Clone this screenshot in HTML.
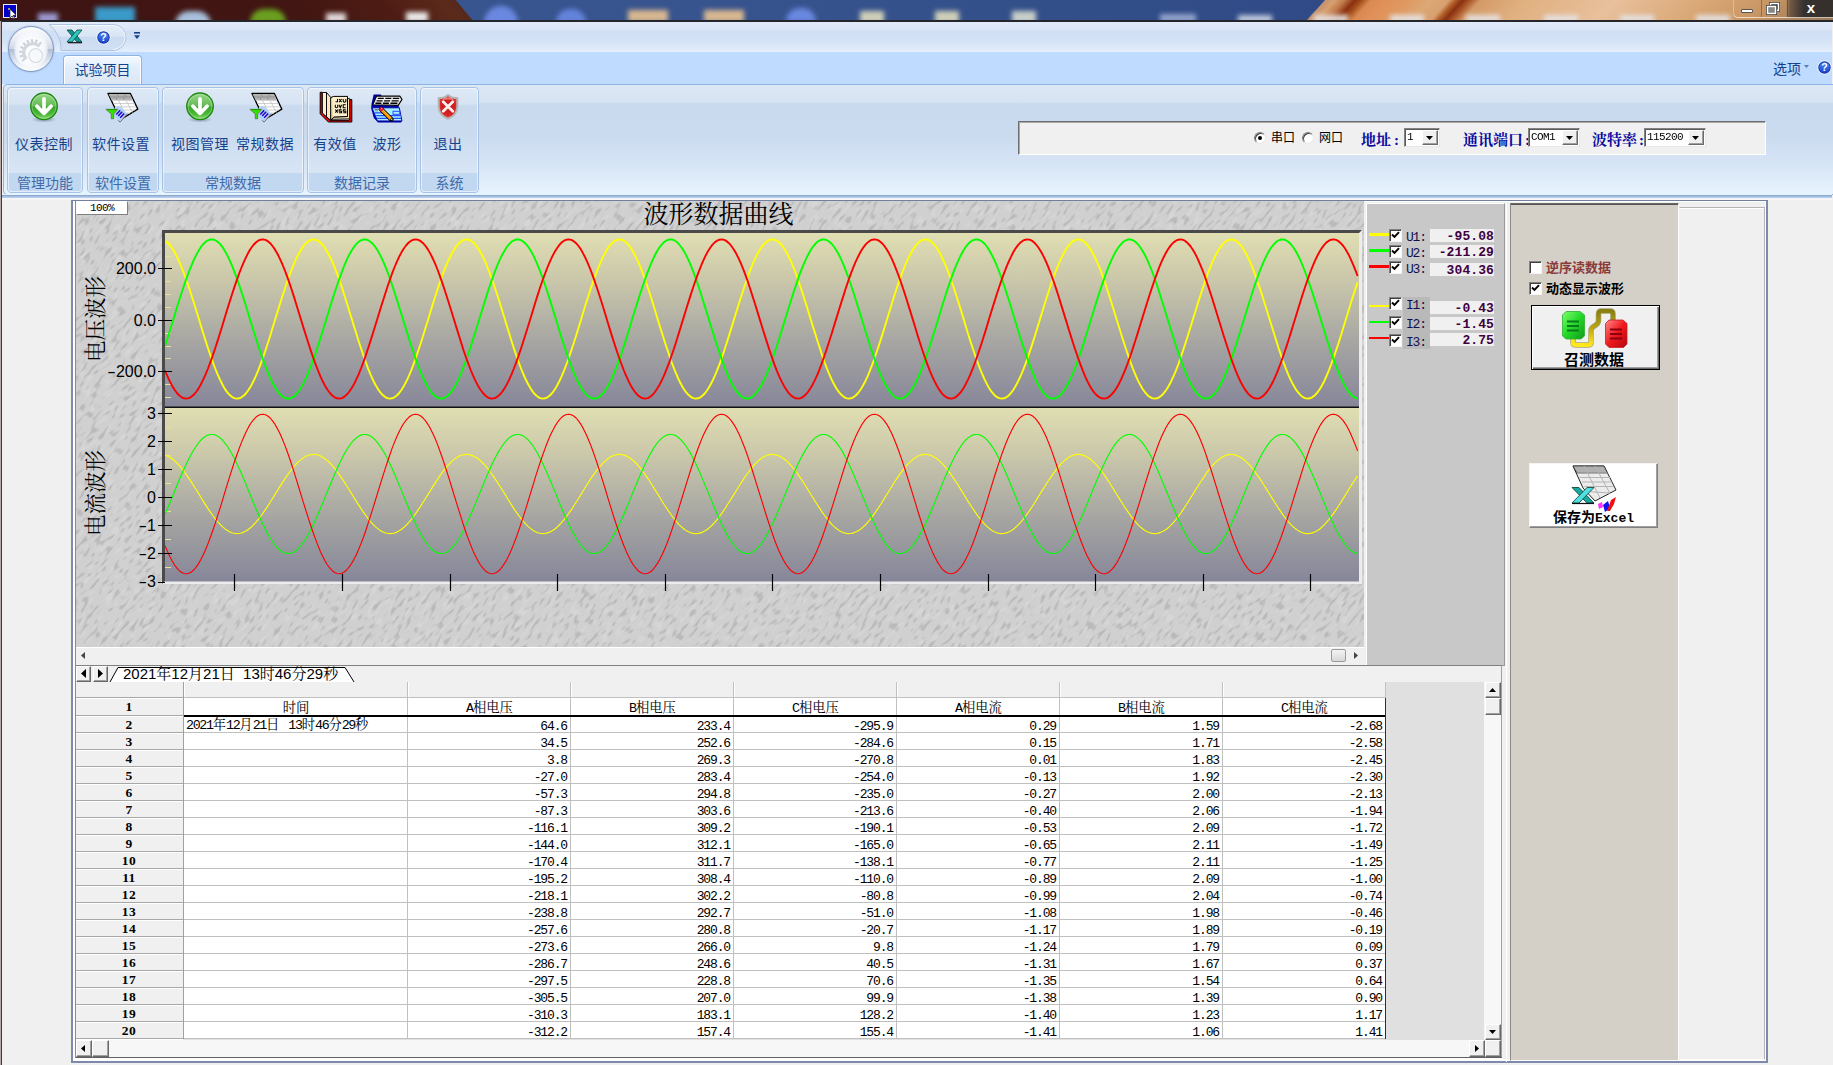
<!DOCTYPE html>
<html lang="zh-CN"><head><meta charset="utf-8"><title>波形数据曲线</title>
<style>

html,body{margin:0;padding:0}
body{width:1833px;height:1065px;overflow:hidden;position:relative;background:#f0f0f0;
 font-family:"Liberation Sans","Noto Sans CJK SC",sans-serif;font-size:12px;color:#000}
.a{position:absolute}
.sans{font-family:"Liberation Sans","Noto Sans CJK SC",sans-serif}
.serif{font-family:"Liberation Serif","Noto Serif CJK SC",serif}
.mono{font-family:"Liberation Mono","Noto Sans CJK SC",monospace}
/* title bar */
#title{left:0;top:0;width:1833px;height:20px;overflow:hidden;background:linear-gradient(90deg,#3a5690 0,#38548e 700px,#34508a 1000px,#2f4a86 1330px)}
#tl{position:absolute;left:-30px;top:0;width:493.5px;height:20px;transform:skewX(40deg);background:linear-gradient(90deg,#3d1414 0,#421612 330px,#4e1c14 420px,#5c2a1a 480px,#56281c 493px)}
#tr{position:absolute;left:1315.5px;top:0;width:560px;height:20px;transform:skewX(-42deg);background:linear-gradient(90deg,#c09070 0,#d8a070 10px,#c07848 20px,#8a3010 30px,#a04818 36px,#d88850 46px,#e09058 60px,#df9a62 85px,#dca874 105px,#d8a070 124px,#b05c28 131px,#8a3010 138px,#a85428 145px,#d49a68 156px,#e0b080 200px,#e8c09c 290px,#d8a674 385px,#c89664 445px,#b08860 475px,#8a7058 560px)}
#title i{position:absolute;display:block;filter:blur(2.5px)}
#titleline{left:0;top:20px;width:1833px;height:1.5px;background:#25252c}
/* ribbon */
#qat{left:2px;top:21.5px;width:1830px;height:30.5px;background:linear-gradient(180deg,#e0eaf9 0,#dae6f7 7.5px,#d0dff4 9.5px,#d2e1f5 17.5px,#e2edfb 28.5px,#e4eefb 29.5px,#a9c8ef 29.5px,#a9c8ef 30.5px)}
#tabrow{left:2px;top:52px;width:1830px;height:32px;background:#bfdbff}
#tab{left:63px;top:55px;width:77px;height:29px;border:1px solid #8db2e3;border-bottom:none;border-radius:4px 4px 0 0;
 background:linear-gradient(180deg,#f4f9ff 0,#e3eefb 40%,#dbe7f6 100%);box-shadow:inset 1px 1px 0 #fff, inset -1px 0 0 #fff;
 color:#15428b;font-size:14px;line-height:29px;text-align:center}
#panel{left:3px;top:84px;width:1832px;height:109px;border:1px solid #8db2e3;border-radius:4px;
 background:linear-gradient(180deg,#dde8f5 0,#d6e3f3 17px,#c8d9ee 19px,#cadaef 50px,#d9e7f7 85px,#e7f3fe 108px)}
.grp{top:86.5px;height:106px;border:1px solid #a6c2e4;border-radius:4px;box-sizing:border-box;overflow:hidden;
 background:linear-gradient(180deg,#dfe9f6 0,#d6e3f3 16px,#c9daee 18px,#ccdcf0 50px,#d8e5f5 85px)}
.grp:after{content:"";position:absolute;left:0;top:0;right:0;bottom:0;border:1px solid rgba(255,255,255,.55);border-radius:3px;pointer-events:none}
.grp .cap{position:absolute;left:0;right:0;bottom:0;height:19px;background:#c2d8f1;color:#3e6aaa;font-size:14px;line-height:21px;overflow:hidden;text-align:center}
.rb{position:absolute;top:0;height:84px;color:#15428b;font-size:14px;text-align:center}
.rb span{position:absolute;left:-10px;right:-10px;top:46px;letter-spacing:.45px;line-height:20px;white-space:nowrap}
.rb svg{position:absolute;left:50%;top:3.5px;margin-left:-17px}
#ribbot{left:2px;top:194px;width:1830px;height:6px;background:linear-gradient(180deg,#dff4ff 0,#dff4ff 1px,#93a9cb 1px,#93a9cb 2px,#a4bce0 2px,#a4bce0 3px,#b6cff0 3px,#b6cff0 4px,#f5f5f5 4px,#f5f5f5 6px)}

</style></head>
<body>
<div id="title" class="a"><div id="tl"></div><div id="tr"></div><i style="left:38px;top:13px;width:20px;height:10px;background:#9a9ad0;"></i><i style="left:95px;top:7px;width:40px;height:16px;background:#3a9ac8;"></i><i style="left:175px;top:11px;width:36px;height:14px;background:#a8c0dc;border-radius:18px 18px 0 0"></i><i style="left:250px;top:9px;width:36px;height:14px;background:#6aa020;border-radius:18px 18px 0 0"></i><i style="left:326px;top:13px;width:20px;height:10px;background:#e0d8d8;"></i><i style="left:406px;top:12px;width:22px;height:10px;background:#ececec;"></i><i style="left:484px;top:6px;width:34px;height:18px;background:#6a88e0;border-radius:17px 17px 0 0"></i><i style="left:556px;top:9px;width:30px;height:14px;background:#6484dc;border-radius:15px 15px 0 0"></i><i style="left:628px;top:10px;width:40px;height:12px;background:#d8b890;"></i><i style="left:704px;top:10px;width:40px;height:12px;background:#d8b890;"></i><i style="left:786px;top:8px;width:30px;height:14px;background:#6a88e0;border-radius:15px 15px 0 0"></i><i style="left:860px;top:11px;width:24px;height:12px;background:#d0d0b8;"></i><i style="left:935px;top:11px;width:24px;height:12px;background:#d0d0b8;"></i><i style="left:1012px;top:11px;width:24px;height:12px;background:#c8d0c8;"></i><i style="left:1160px;top:14px;width:36px;height:8px;background:#94a4cc;"></i><i style="left:1238px;top:15px;width:34px;height:8px;background:#c0c8dc;"></i><i style="left:1314px;top:15px;width:34px;height:7px;background:#e4e0e0;"></i><i style="left:1390px;top:15px;width:34px;height:7px;background:#e4e0e0;"></i><i style="left:1466px;top:15px;width:34px;height:7px;background:#e4e0e0;"></i><i style="left:1544px;top:15px;width:34px;height:7px;background:#e4e0e0;"></i><i style="left:1620px;top:15px;width:34px;height:7px;background:#e4e0e0;"></i><i style="left:1696px;top:15px;width:34px;height:7px;background:#e4e0e0;"></i></div><div id="titleline" class="a"></div><div class="a" style="left:3px;top:4px;width:14px;height:14px;background:#0000c8;border:1px solid #e8e8f0;box-sizing:border-box"></div><svg class="a" style="left:3px;top:4px" width="16" height="16" viewBox="0 0 16 16"><path d="M7 5 L7 14 L9 12 L11 15 L12 14 L10 11.5 L13 11 Z" fill="#fff" stroke="#222" stroke-width=".7"/><circle cx="6" cy="5" r="1" fill="#d8c060"/></svg><div class="a" style="left:1733px;top:0;width:100px;height:18px;border:1px solid rgba(255,240,225,.75);border-top:none;border-right:none;border-radius:0 0 0 5px;box-sizing:border-box;background:linear-gradient(90deg,rgba(0,0,0,0) 0,rgba(0,0,0,0) 52px,rgba(60,50,45,.55) 56px,rgba(40,40,42,.9) 70px,rgba(48,44,42,.95) 100px)"></div><div class="a" style="left:1761px;top:0;width:1px;height:17px;background:rgba(120,80,50,.6)"></div><div class="a" style="left:1787px;top:0;width:1px;height:17px;background:rgba(90,60,40,.7)"></div><div class="a" style="left:1741px;top:9px;width:12px;height:4px;background:#fff;border:1px solid #555;box-sizing:border-box;border-radius:1px"></div><svg class="a" style="left:1766px;top:2px" width="14" height="13" viewBox="0 0 14 13"><rect x="4.5" y="1.5" width="8" height="7" fill="none" stroke="#444" stroke-width="3"/><rect x="4.5" y="1.5" width="8" height="7" fill="none" stroke="#fff" stroke-width="1.4"/><rect x="1.5" y="4.5" width="8" height="7" fill="#777" stroke="#444" stroke-width="3"/><rect x="1.5" y="4.5" width="8" height="7" fill="#888" stroke="#fff" stroke-width="1.4"/></svg><div class="a sans" style="left:1803px;top:-1px;width:16px;height:18px;color:#fff;font-weight:bold;font-size:15px;line-height:18px;text-align:center">x</div><div class="a" style="left:0;top:21px;width:.700px;height:1044px;background:#b8a8a8"></div><div class="a" style="left:.700px;top:21px;width:1.300px;height:1044px;background:#4a3838"></div><div id="qat" class="a"></div><div id="tabrow" class="a"></div><svg class="a" style="left:40px;top:22px" width="90" height="30" viewBox="40 22 90 30"><defs><linearGradient id="qp" x1="0" y1="0" x2="0" y2="1"><stop offset="0" stop-color="#e4edf9"/><stop offset=".45" stop-color="#d9e5f5"/><stop offset=".5" stop-color="#cadaf0"/><stop offset="1" stop-color="#d2e0f3"/></linearGradient></defs><path d="M49 24.500 H113 A13 13 0 0 1 113 50.500 H61 A30 30 0 0 0 49 24.500 Z" fill="url(#qp)" stroke="#aec4e4" stroke-width="1"/><path d="M51.500 25.500 H113 A12 12 0 0 1 113 49.500" fill="none" stroke="rgba(255,255,255,.7)" stroke-width="1"/></svg><svg class="a" style="left:66px;top:28px" width="18" height="16" viewBox="0 0 18 16"><path d="M1 2 L6 2 L16 14 L11 14 Z" fill="#109890" stroke="#064840" stroke-width=".8"/><path d="M11 2 L16 2 L6 14 L1 14 Z" fill="#30c8c0" stroke="#064840" stroke-width=".8"/><path d="M2 14.7 L16 14.7" stroke="#111" stroke-width="1.2"/></svg><svg class="a" style="left:95.500px;top:30px" width="15" height="15" viewBox="0 0 15 15"><defs><linearGradient id="hq" x1="0" y1="0" x2="0" y2="1"><stop offset="0" stop-color="#4a86ff"/><stop offset="1" stop-color="#1a44c8"/></linearGradient></defs><circle cx="7.500" cy="7.500" r="7.200" fill="#eef3ff"/><circle cx="7.500" cy="7.500" r="6.200" fill="#1634a8"/><circle cx="7.500" cy="7.500" r="5.300" fill="url(#hq)"/><text x="7.500" y="11.200" text-anchor="middle" font-family="Liberation Sans,sans-serif" font-weight="bold" font-size="10.500" fill="#fff">?</text></svg><svg class="a" style="left:133px;top:32px" width="8" height="8" viewBox="0 0 8 8"><rect x="1" y="0" width="6" height="1.6" fill="#15428b"/><path d="M1 3.2 L7 3.2 L4 7 Z" fill="#15428b"/></svg><div class="a" style="left:8px;top:25.500px;width:46px;height:46px;box-sizing:border-box;border-radius:50%;border:1px solid #7f9ac4;background:linear-gradient(180deg,#fbfcfe 0,#e9edf4 28%,#d0d8e5 49%,#aebdd6 50%,#d2dcea 70%,#f4f7fb 90%,#ffffff 100%);box-shadow:0 0 1.500px rgba(90,120,170,.7)"></div><div class="a" style="left:14px;top:31px;width:34px;height:36px;border-radius:50%;background:radial-gradient(ellipse at 50% 55%,#ffffff 0,#fafbfd 45%,rgba(246,248,252,.85) 62%,rgba(240,244,250,0) 78%)"></div><svg class="a" style="left:17px;top:37px" width="30" height="30" viewBox="0 0 30 30"><g fill="none" stroke="#ccd2da" stroke-width="3.600" stroke-dasharray="2.100 2.100"><path d="M7.300 23.500 A11 11 0 0 1 24 7.500"/></g><path d="M9.200 22 A8.600 8.600 0 0 1 22.400 9.400" fill="none" stroke="#d3d8df" stroke-width="3.400"/><circle cx="18.700" cy="18.600" r="6.900" fill="#f7f8fb" stroke="#d8dde5" stroke-width="1.200"/></svg><div id="tab" class="a">试验项目</div><div id="panel" class="a"></div><div class="a grp" style="left:7px;width:76px"><div class="rb" style="left:16px;width:40px"><svg width="34" height="34" viewBox="0 0 34 34"><defs><linearGradient id="gg1" x1="0" y1="0" x2="0" y2="1"><stop offset="0" stop-color="#9ad88c"/><stop offset=".5" stop-color="#62b952"/><stop offset=".52" stop-color="#37a524"/><stop offset=".8" stop-color="#4db83a"/><stop offset="1" stop-color="#86dc6c"/></linearGradient><radialGradient id="gs1"><stop offset="0" stop-color="rgba(40,50,70,.45)"/><stop offset="1" stop-color="rgba(40,50,70,0)"/></radialGradient></defs><ellipse cx="17" cy="28.500" rx="12.500" ry="3.200" fill="url(#gs1)"/><circle cx="17" cy="15.300" r="13.300" fill="url(#gg1)" stroke="#1f8a12" stroke-width="1.300"/><circle cx="17" cy="15.300" r="12" fill="none" stroke="rgba(255,255,255,.28)" stroke-width="1"/><path d="M17 7.800 V21.500 M9.900 15.300 L17 22.400 L24.100 15.300" fill="none" stroke="#fff" stroke-width="3.700" stroke-linecap="round" stroke-linejoin="round"/></svg><span>仪表控制</span></div><div class="cap">管理功能</div></div><div class="a grp" style="left:87px;width:72px"><div class="rb" style="left:13px;width:40px"><svg width="36" height="34" viewBox="0 0 36 34"><path d="M4 2.400 H26.300 L33.800 18.100 L16.400 28.600 Z" fill="#fcfcfc" stroke="#000" stroke-width="1.300" stroke-linejoin="round"/><path d="M4.600 3 H25.900 L29 9.200 H7.700 Z" fill="#b2b2b2"/><path d="M6 6 H27.400 M13 3 L14.600 6 M20.500 3 L22 6 M11.500 6 L13 9.200 M19 6 L20.500 9.200" stroke="#8c8c8c" stroke-width=".8" fill="none"/><path d="M7.700 9.200 H29 M9.400 12.500 H30.600 M11 15.800 H32.200 M13 19 H31 M16 22.200 H26 M14.500 9.200 L22 24.500 M22 9.200 L28.500 21.500" stroke="#c4c4c4" stroke-width=".8" fill="none"/><path d="M11 15.300 L16.500 15.600 L23.300 22.800 L16.200 31.100 L10 25 Z" fill="#b4d4fc"/><path d="M23.300 22.800 L16.200 31.100 L14 29.300" fill="none" stroke="#6a6a6a" stroke-width=".9"/><path d="M12.200 23.500 L16.200 19.200 M14.200 25.100 L18.200 20.800 M16.200 26.700 L20.200 22.400" stroke="#2400c8" stroke-width="1.500"/><path d="M1.900 18.300 H13.800 L9.700 23 V27.800 H7.200 V23 Z" fill="#35e000" stroke="#4a5a4a" stroke-width=".6" stroke-linejoin="round"/><path d="M2.500 18.600 H13.200" stroke="#1c9c00" stroke-width=".9"/></svg><span>软件设置</span></div><div class="cap">软件设置</div></div><div class="a grp" style="left:162px;width:142px"><div class="rb" style="left:17px;width:40px"><svg width="34" height="34" viewBox="0 0 34 34"><defs><linearGradient id="gg2" x1="0" y1="0" x2="0" y2="1"><stop offset="0" stop-color="#9ad88c"/><stop offset=".5" stop-color="#62b952"/><stop offset=".52" stop-color="#37a524"/><stop offset=".8" stop-color="#4db83a"/><stop offset="1" stop-color="#86dc6c"/></linearGradient><radialGradient id="gs2"><stop offset="0" stop-color="rgba(40,50,70,.45)"/><stop offset="1" stop-color="rgba(40,50,70,0)"/></radialGradient></defs><ellipse cx="17" cy="28.500" rx="12.500" ry="3.200" fill="url(#gs2)"/><circle cx="17" cy="15.300" r="13.300" fill="url(#gg2)" stroke="#1f8a12" stroke-width="1.300"/><circle cx="17" cy="15.300" r="12" fill="none" stroke="rgba(255,255,255,.28)" stroke-width="1"/><path d="M17 7.800 V21.500 M9.900 15.300 L17 22.400 L24.100 15.300" fill="none" stroke="#fff" stroke-width="3.700" stroke-linecap="round" stroke-linejoin="round"/></svg><span>视图管理</span></div><div class="rb" style="left:82px;width:40px"><svg width="36" height="34" viewBox="0 0 36 34"><path d="M4 2.400 H26.300 L33.800 18.100 L16.400 28.600 Z" fill="#fcfcfc" stroke="#000" stroke-width="1.300" stroke-linejoin="round"/><path d="M4.600 3 H25.900 L29 9.200 H7.700 Z" fill="#b2b2b2"/><path d="M6 6 H27.400 M13 3 L14.600 6 M20.500 3 L22 6 M11.500 6 L13 9.200 M19 6 L20.500 9.200" stroke="#8c8c8c" stroke-width=".8" fill="none"/><path d="M7.700 9.200 H29 M9.400 12.500 H30.600 M11 15.800 H32.200 M13 19 H31 M16 22.200 H26 M14.500 9.200 L22 24.500 M22 9.200 L28.500 21.500" stroke="#c4c4c4" stroke-width=".8" fill="none"/><path d="M11 15.300 L16.500 15.600 L23.300 22.800 L16.200 31.100 L10 25 Z" fill="#b4d4fc"/><path d="M23.300 22.800 L16.200 31.100 L14 29.300" fill="none" stroke="#6a6a6a" stroke-width=".9"/><path d="M12.200 23.500 L16.200 19.200 M14.200 25.100 L18.200 20.800 M16.200 26.700 L20.200 22.400" stroke="#2400c8" stroke-width="1.500"/><path d="M1.900 18.300 H13.800 L9.700 23 V27.800 H7.200 V23 Z" fill="#35e000" stroke="#4a5a4a" stroke-width=".6" stroke-linejoin="round"/><path d="M2.500 18.600 H13.200" stroke="#1c9c00" stroke-width=".9"/></svg><span>常规数据</span></div><div class="cap">常规数据</div></div><div class="a grp" style="left:307px;width:110px"><div class="rb" style="left:7px;width:40px"><svg width="36" height="34" viewBox="0 0 36 34"><path d="M2.200 1.300 H4.300 V22 L12 29.300 H31.600 V8.600 H33.800 V31 H10.400 L2.200 22.800 Z" fill="#ff0000" stroke="#000" stroke-width="1" stroke-linejoin="round"/><path d="M4.400 1.500 H8.500 V25.800 L4.400 22 Z" fill="#fdf0cc" stroke="#000" stroke-width=".9" stroke-linejoin="round"/><path d="M8.500 1.500 L12.800 6.500 V29.300 L8.500 25.800 Z" fill="#fbe9c0" stroke="#000" stroke-width=".9" stroke-linejoin="round"/><path d="M29.500 7.500 H31.600 V27.800 L13.600 28.300 L15.800 26 L29.500 25.500 Z" fill="#f6e6ba" stroke="#000" stroke-width=".8" stroke-linejoin="round"/><path d="M12.800 6.500 L15.800 5.400 H29.500 V25.500 L15.800 26 L12.800 29.300 Z" fill="#fdf0cc" stroke="#000" stroke-width="1" stroke-linejoin="round"/><path d="M13.600 8 L14.600 26.500" stroke="#e8d4a0" stroke-width="1.200"/><g stroke="#000" stroke-width="1.050" fill="none"><path d="M19.500 8 V10.800 H17.500 M21 8 L23.600 11.200 M23.600 8 L21 11.200 M25.200 8 V10.400 Q26.500 12 27.800 10.400 V8"/><path d="M17.300 13.800 V16 Q18.500 17.600 19.700 16 V13.800 M21 13.800 L22.300 16.800 L23.600 13.800 M27.800 13.800 H25.200 V16.700 H27.800"/><path d="M17.300 18.700 L19.900 21.700 M19.900 18.700 L17.300 21.700 M23.600 18.700 H21.200 V20.200 H23.600 V21.700 H21 M27.800 18.700 H25.400 V20.200 H27.800 V21.700 H25.200"/></g></svg><span>有效值</span></div><div class="rb" style="left:59px;width:40px"><svg width="34" height="34" viewBox="0 0 34 34"><path d="M3.600 3.600 H11 L11.500 5.100 H6.600 L2.800 13.800 L28.200 14.400 L29.300 16.800 L32 29.900 L31 31.600 H8 L3.800 27 L1.200 17.500 L1.500 13 Z" fill="#0000a8"/><path d="M6.600 5.100 H29.800 L32 8.400 L28.200 14.400 L2.800 13.800 Z" fill="#eeeeee" stroke="#000" stroke-width="1.100" stroke-linejoin="round"/><path d="M7.800 7.400 H13.800 M15.300 7.400 H21.300 M22.800 7.400 H29.200 M6.600 9.900 H12.600 M14.100 9.900 H20.100 M21.600 9.900 H28.600 M5.400 12.300 H11.400 M12.900 12.300 H18.900 M20.400 12.300 H27.400" stroke="#000" stroke-width="1.400"/><path d="M2 16.800 H29.300 L32 29.900 H7.500 Z" fill="#a4f2ff" stroke="#0000a8" stroke-width=".9" stroke-linejoin="round"/><path d="M5 21.800 H13.500 M6.200 24.600 H30 M7.200 27.300 H31" stroke="#2848ff" stroke-width="1.200"/><rect x="23" y="20.300" width="6.800" height="3" fill="none" stroke="#2848ff" stroke-width="1"/><path d="M4.500 18.500 H9 M5 19.800 H8" stroke="#808080" stroke-width="1"/><path d="M11.200 18.300 L21.300 28.400" stroke="#000" stroke-width="4.600" stroke-linecap="round"/><path d="M11.600 18.700 L20.800 27.900" stroke="#ff9800" stroke-width="2.900" stroke-linecap="butt"/><path d="M12.400 18.300 L21.400 27.300" stroke="#ffc860" stroke-width=".9"/><circle cx="11.200" cy="18.200" r="1.900" fill="#f0103c"/><circle cx="11.600" cy="17.600" r=".8" fill="#ff9ab0"/><path d="M20.200 28.700 L22.100 26.800 L23 29.800 Z" fill="#fff0d0" stroke="#000" stroke-width=".6"/></svg><span>波形</span></div><div class="cap">数据记录</div></div><div class="a grp" style="left:420px;width:59px"><div class="rb" style="left:7px;width:40px"><svg width="34" height="34" viewBox="0 0 34 34"><defs><radialGradient id="sg" cx="50%" cy="45%" r="65%"><stop offset="0" stop-color="#c81818"/><stop offset=".55" stop-color="#d42020"/><stop offset="1" stop-color="#e86060"/></radialGradient></defs><path d="M17 4 C15 5.800 11 7.100 7.700 7.100 L7.700 16 C8.100 21.800 12 25.800 17 27.800 C22 25.800 25.900 21.800 26.300 16 L26.300 7.100 C23 7.100 19 5.800 17 4 Z" fill="url(#sg)" stroke="#b4b4b4" stroke-width="2" stroke-linejoin="round"/><path d="M13 6.800 Q17 5.500 21 6.800 L22.500 9 Q17 7.800 11.500 9 Z" fill="rgba(255,200,200,.5)"/><path d="M12.200 10.700 L21.800 20.300 M21.800 10.700 L12.200 20.300" stroke="#fff" stroke-width="2.800" stroke-linecap="round" opacity=".93"/></svg><span>退出</span></div><div class="cap">系统</div></div><div id="ribbot" class="a"></div><div class="a" style="left:1773px;top:59.500px;color:#15428b;font-size:14px;line-height:18px">选项</div><svg class="a" style="left:1804px;top:65px" width="6" height="4" viewBox="0 0 6 4"><path d="M0 0h5L2.500 3z" fill="#567db1"/></svg><svg class="a" style="left:1816.500px;top:59.500px" width="15" height="15" viewBox="0 0 15 15"><circle cx="7.500" cy="7.500" r="7.200" fill="#eef3ff"/><circle cx="7.500" cy="7.500" r="6.200" fill="#1634a8"/><circle cx="7.500" cy="7.500" r="5.300" fill="url(#hq)"/><text x="7.500" y="11.200" text-anchor="middle" font-family="Liberation Sans,sans-serif" font-weight="bold" font-size="10.500" fill="#fff">?</text></svg><div class="a" style="left:1018px;top:121px;width:748px;height:34px;box-sizing:border-box;background:#f0f0f0;border:1px solid;border-color:#6e6e6e #fff #fff #6e6e6e;box-shadow:inset 1px 1px 0 #a8a8a8"></div><div class="a" style="left:1254px;top:132px;width:12px;height:12px;border-radius:50%;box-sizing:border-box;background:#fff;border:1px solid;border-color:#808080 #e8e8e8 #e8e8e8 #808080;box-shadow:inset 1px 1px 0 #404040"></div><div class="a" style="left:1258px;top:136px;width:4px;height:4px;border-radius:50%;background:#000"></div><div class="a" style="left:1271px;top:130px;font-size:12px;line-height:16px">串口</div><div class="a" style="left:1302px;top:132px;width:12px;height:12px;border-radius:50%;box-sizing:border-box;background:#fff;border:1px solid;border-color:#808080 #e8e8e8 #e8e8e8 #808080;box-shadow:inset 1px 1px 0 #404040"></div><div class="a" style="left:1319px;top:130px;font-size:12px;line-height:16px">网口</div><div class="a serif" style="left:1361px;top:131px;font-weight:bold;font-size:15px;line-height:18px;color:#0a0aa0;white-space:nowrap">地址<span style="margin-left:3px">:</span></div><div class="a" style="left:1404px;top:128px;width:36px;height:19px;box-sizing:border-box;background:#fff;border:1px solid;border-color:#828282 #e8e8e8 #e8e8e8 #828282;box-shadow:inset 1px 1px 0 #5a5a5a"></div><div class="a mono" style="left:1407px;top:130px;font-size:11px;line-height:14px;letter-spacing:-.6px;transform:scaleY(1.05)">1</div><div class="a" style="left:1422px;top:130px;width:16px;height:15px;box-sizing:border-box;background:#f0f0f0;border:1px solid;border-color:#fff #6a6a6a #6a6a6a #fff;box-shadow:inset -1px -1px 0 #a0a0a0"></div><svg class="a" style="left:1426px;top:136px" width="7" height="4" viewBox="0 0 7 4"><path d="M0 0h7L3.500 4z" fill="#000"/></svg><div class="a serif" style="left:1463px;top:131px;font-weight:bold;font-size:15px;line-height:18px;color:#0a0aa0;white-space:nowrap">通讯端口<span style="margin-left:2px">:</span></div><div class="a" style="left:1528px;top:128px;width:52px;height:19px;box-sizing:border-box;background:#fff;border:1px solid;border-color:#828282 #e8e8e8 #e8e8e8 #828282;box-shadow:inset 1px 1px 0 #5a5a5a"></div><div class="a mono" style="left:1531px;top:130px;font-size:11px;line-height:14px;letter-spacing:-.6px;transform:scaleY(1.05)">COM1</div><div class="a" style="left:1562px;top:130px;width:16px;height:15px;box-sizing:border-box;background:#f0f0f0;border:1px solid;border-color:#fff #6a6a6a #6a6a6a #fff;box-shadow:inset -1px -1px 0 #a0a0a0"></div><svg class="a" style="left:1566px;top:136px" width="7" height="4" viewBox="0 0 7 4"><path d="M0 0h7L3.500 4z" fill="#000"/></svg><div class="a serif" style="left:1592px;top:131px;font-weight:bold;font-size:15px;line-height:18px;color:#0a0aa0;white-space:nowrap">波特率<span style="margin-left:2px">:</span></div><div class="a" style="left:1644px;top:128px;width:62px;height:19px;box-sizing:border-box;background:#fff;border:1px solid;border-color:#828282 #e8e8e8 #e8e8e8 #828282;box-shadow:inset 1px 1px 0 #5a5a5a"></div><div class="a mono" style="left:1647px;top:130px;font-size:11px;line-height:14px;letter-spacing:-.6px;transform:scaleY(1.05)">115200</div><div class="a" style="left:1688px;top:130px;width:16px;height:15px;box-sizing:border-box;background:#f0f0f0;border:1px solid;border-color:#fff #6a6a6a #6a6a6a #fff;box-shadow:inset -1px -1px 0 #a0a0a0"></div><svg class="a" style="left:1692px;top:136px" width="7" height="4" viewBox="0 0 7 4"><path d="M0 0h7L3.500 4z" fill="#000"/></svg><div class="a" style="left:71px;top:200px;width:1697px;height:863px;box-sizing:border-box;border:2px solid #7d89ad;border-top:1px solid #737f9f"></div><div class="a" style="left:73px;top:201px;width:1693px;height:860px;box-sizing:border-box;border:1px solid #fff;border-left-width:2px;border-bottom-width:2px"></div><div class="a" style="left:75px;top:201px;width:1px;height:857px;background:#8a8a8a"></div><svg class="a" style="left:76px;top:201px" width="1288" height="446" viewBox="76 201 1288 446"><defs>
<filter id="tex" x="0" y="0" width="100%" height="100%" color-interpolation-filters="sRGB"><feTurbulence type="fractalNoise" baseFrequency="0.11 0.3" numOctaves="1" seed="5"/><feColorMatrix type="matrix" values="0 0 0 0 0.62  0 0 0 0 0.62  0 0 0 0 0.62  7 0 0 0 -3.75"/></filter>
<filter id="tex2" x="0" y="0" width="100%" height="100%" color-interpolation-filters="sRGB"><feTurbulence type="fractalNoise" baseFrequency="0.09 0.26" numOctaves="1" seed="12"/><feColorMatrix type="matrix" values="0 0 0 0 0.92  0 0 0 0 0.92  0 0 0 0 0.92  6 0 0 0 -3.2"/></filter>
<linearGradient id="pg" x1="0" y1="0" x2="0" y2="1"><stop offset="0" stop-color="#e0deb2"/><stop offset=".25" stop-color="#ccc9ab"/><stop offset=".6" stop-color="#a9a8a3"/><stop offset="1" stop-color="#86869a"/></linearGradient>
<clipPath id="cv"><rect x="165" y="233" width="1194" height="174"/></clipPath>
<clipPath id="cc"><rect x="165" y="408" width="1194" height="173.500"/></clipPath>
<clipPath id="call"><rect x="76" y="201" width="1288" height="446"/></clipPath>
</defs><rect x="76" y="201" width="1288" height="446" fill="#d0d0d0"/><g clip-path="url(#call)"><g transform="rotate(-50 720 424)"><rect x="-100" y="-400" width="1700" height="1700" filter="url(#tex)" opacity=".42"/><rect x="-100" y="-400" width="1700" height="1700" filter="url(#tex2)" opacity=".22"/></g></g><rect x="162" y="230" width="1200" height="354" fill="#ececec"/><path d="M162 230 H1362 L1359 233 H165 V581 L162 584 Z" fill="#4a4a4a"/><rect x="165" y="233" width="1194" height="174" fill="url(#pg)"/><rect x="165" y="408" width="1194" height="173.500" fill="url(#pg)"/><rect x="165" y="406.500" width="1194" height="1.500" fill="#111"/><path d="M165 397.5H171M165 384.5H171M165 358.5H171M165 346.5H171M165 333.5H171M165 307.5H171M165 294.5H171M165 281.5H171M165 256.5H171M165 243.5H171M165 567.5H171M165 539.5H171M165 511.5H171M165 483.5H171M165 455.5H171M165 427.5H171" stroke="#e6e09a" stroke-width="1" fill="none"/><g clip-path="url(#cv)" fill="none" stroke-width="1.9" stroke-linejoin="round"><polyline points="165.0,240.7 167.4,242.5 169.8,245.0 172.2,248.2 174.6,252.1 176.9,256.7 179.3,261.8 181.7,267.6 184.1,273.8 186.5,280.4 188.9,287.4 191.3,294.7 193.7,302.3 196.1,310.0 198.5,317.8 200.8,325.6 203.2,333.3 205.6,340.9 208.0,348.3 210.4,355.4 212.8,362.2 215.2,368.5 217.6,374.4 220.0,379.7 222.4,384.5 224.7,388.6 227.1,392.1 229.5,394.8 231.9,396.8 234.3,398.1 236.7,398.6 239.1,398.3 241.5,397.3 243.9,395.5 246.3,393.0 248.6,389.8 251.0,385.9 253.4,381.3 255.8,376.1 258.2,370.4 260.6,364.2 263.0,357.6 265.4,350.6 267.8,343.3 270.2,335.7 272.5,328.0 274.9,320.2 277.3,312.4 279.7,304.7 282.1,297.1 284.5,289.7 286.9,282.6 289.3,275.8 291.7,269.4 294.1,263.6 296.4,258.2 298.8,253.5 301.2,249.4 303.6,245.9 306.0,243.2 308.4,241.2 310.8,239.9 313.2,239.4 315.6,239.7 318.0,240.7 320.3,242.5 322.7,245.0 325.1,248.2 327.5,252.2 329.9,256.7 332.3,261.9 334.7,267.6 337.1,273.8 339.5,280.4 341.9,287.4 344.2,294.7 346.6,302.3 349.0,310.0 351.4,317.8 353.8,325.6 356.2,333.3 358.6,341.0 361.0,348.3 363.4,355.5 365.8,362.2 368.1,368.6 370.5,374.4 372.9,379.8 375.3,384.5 377.7,388.6 380.1,392.1 382.5,394.8 384.9,396.8 387.3,398.1 389.7,398.6 392.0,398.3 394.4,397.3 396.8,395.5 399.2,393.0 401.6,389.8 404.0,385.8 406.4,381.3 408.8,376.1 411.2,370.4 413.6,364.2 415.9,357.6 418.3,350.6 420.7,343.2 423.1,335.7 425.5,328.0 427.9,320.2 430.3,312.4 432.7,304.6 435.1,297.0 437.5,289.6 439.8,282.5 442.2,275.8 444.6,269.4 447.0,263.6 449.4,258.2 451.8,253.5 454.2,249.4 456.6,245.9 459.0,243.2 461.4,241.2 463.7,239.9 466.1,239.4 468.5,239.7 470.9,240.7 473.3,242.5 475.7,245.0 478.1,248.3 480.5,252.2 482.9,256.7 485.3,261.9 487.6,267.6 490.0,273.8 492.4,280.4 494.8,287.5 497.2,294.8 499.6,302.3 502.0,310.0 504.4,317.8 506.8,325.6 509.2,333.4 511.5,341.0 513.9,348.4 516.3,355.5 518.7,362.2 521.1,368.6 523.5,374.5 525.9,379.8 528.3,384.5 530.7,388.6 533.1,392.1 535.4,394.8 537.8,396.8 540.2,398.1 542.6,398.6 545.0,398.3 547.4,397.3 549.8,395.5 552.2,393.0 554.6,389.7 557.0,385.8 559.3,381.3 561.7,376.1 564.1,370.4 566.5,364.2 568.9,357.5 571.3,350.5 573.7,343.2 576.1,335.7 578.5,327.9 580.9,320.2 583.2,312.3 585.6,304.6 588.0,297.0 590.4,289.6 592.8,282.5 595.2,275.7 597.6,269.4 600.0,263.5 602.4,258.2 604.8,253.5 607.1,249.3 609.5,245.9 611.9,243.2 614.3,241.2 616.7,239.9 619.1,239.4 621.5,239.7 623.9,240.7 626.3,242.5 628.7,245.0 631.0,248.3 633.4,252.2 635.8,256.8 638.2,261.9 640.6,267.6 643.0,273.8 645.4,280.5 647.8,287.5 650.2,294.8 652.6,302.4 654.9,310.1 657.3,317.9 659.7,325.7 662.1,333.4 664.5,341.0 666.9,348.4 669.3,355.5 671.7,362.3 674.1,368.6 676.5,374.5 678.8,379.8 681.2,384.5 683.6,388.7 686.0,392.1 688.4,394.8 690.8,396.8 693.2,398.1 695.6,398.6 698.0,398.3 700.4,397.3 702.7,395.5 705.1,393.0 707.5,389.7 709.9,385.8 712.3,381.2 714.7,376.1 717.1,370.4 719.5,364.2 721.9,357.5 724.3,350.5 726.6,343.2 729.0,335.6 731.4,327.9 733.8,320.1 736.2,312.3 738.6,304.6 741.0,297.0 743.4,289.6 745.8,282.5 748.2,275.7 750.5,269.4 752.9,263.5 755.3,258.2 757.7,253.4 760.1,249.3 762.5,245.9 764.9,243.2 767.3,241.2 769.7,239.9 772.1,239.4 774.4,239.7 776.8,240.7 779.2,242.5 781.6,245.0 784.0,248.3 786.4,252.2 788.8,256.8 791.2,261.9 793.6,267.7 796.0,273.9 798.3,280.5 800.7,287.5 803.1,294.8 805.5,302.4 807.9,310.1 810.3,317.9 812.7,325.7 815.1,333.4 817.5,341.0 819.9,348.4 822.2,355.5 824.6,362.3 827.0,368.6 829.4,374.5 831.8,379.8 834.2,384.6 836.6,388.7 839.0,392.1 841.4,394.8 843.8,396.8 846.1,398.1 848.5,398.6 850.9,398.3 853.3,397.3 855.7,395.5 858.1,393.0 860.5,389.7 862.9,385.8 865.3,381.2 867.7,376.1 870.0,370.3 872.4,364.1 874.8,357.5 877.2,350.5 879.6,343.1 882.0,335.6 884.4,327.9 886.8,320.1 889.2,312.3 891.6,304.5 893.9,296.9 896.3,289.5 898.7,282.4 901.1,275.7 903.5,269.3 905.9,263.5 908.3,258.2 910.7,253.4 913.1,249.3 915.5,245.9 917.8,243.1 920.2,241.1 922.6,239.9 925.0,239.4 927.4,239.7 929.8,240.7 932.2,242.5 934.6,245.1 937.0,248.3 939.4,252.2 941.7,256.8 944.1,262.0 946.5,267.7 948.9,273.9 951.3,280.5 953.7,287.5 956.1,294.9 958.5,302.4 960.9,310.1 963.3,317.9 965.6,325.7 968.0,333.5 970.4,341.1 972.8,348.5 975.2,355.6 977.6,362.3 980.0,368.7 982.4,374.5 984.8,379.8 987.2,384.6 989.5,388.7 991.9,392.1 994.3,394.9 996.7,396.9 999.1,398.1 1001.5,398.6 1003.9,398.3 1006.3,397.3 1008.7,395.5 1011.1,392.9 1013.4,389.7 1015.8,385.8 1018.2,381.2 1020.6,376.0 1023.0,370.3 1025.4,364.1 1027.8,357.5 1030.2,350.4 1032.6,343.1 1035.0,335.6 1037.3,327.9 1039.7,320.1 1042.1,312.2 1044.5,304.5 1046.9,296.9 1049.3,289.5 1051.7,282.4 1054.1,275.7 1056.5,269.3 1058.9,263.5 1061.2,258.1 1063.6,253.4 1066.0,249.3 1068.4,245.9 1070.8,243.1 1073.2,241.1 1075.6,239.9 1078.0,239.4 1080.4,239.7 1082.8,240.7 1085.1,242.5 1087.5,245.1 1089.9,248.3 1092.3,252.2 1094.7,256.8 1097.1,262.0 1099.5,267.7 1101.9,273.9 1104.3,280.6 1106.7,287.6 1109.0,294.9 1111.4,302.5 1113.8,310.2 1116.2,318.0 1118.6,325.8 1121.0,333.5 1123.4,341.1 1125.8,348.5 1128.2,355.6 1130.6,362.4 1132.9,368.7 1135.3,374.5 1137.7,379.9 1140.1,384.6 1142.5,388.7 1144.9,392.1 1147.3,394.9 1149.7,396.9 1152.1,398.1 1154.5,398.6 1156.9,398.3 1159.2,397.3 1161.6,395.5 1164.0,392.9 1166.4,389.7 1168.8,385.8 1171.2,381.2 1173.6,376.0 1176.0,370.3 1178.4,364.1 1180.8,357.4 1183.1,350.4 1185.5,343.1 1187.9,335.5 1190.3,327.8 1192.7,320.0 1195.1,312.2 1197.5,304.5 1199.9,296.9 1202.3,289.5 1204.7,282.4 1207.0,275.6 1209.4,269.3 1211.8,263.4 1214.2,258.1 1216.6,253.4 1219.0,249.3 1221.4,245.9 1223.8,243.1 1226.2,241.1 1228.6,239.9 1230.9,239.4 1233.3,239.7 1235.7,240.7 1238.1,242.5 1240.5,245.1 1242.9,248.3 1245.3,252.3 1247.7,256.8 1250.1,262.0 1252.5,267.7 1254.8,273.9 1257.2,280.6 1259.6,287.6 1262.0,294.9 1264.4,302.5 1266.8,310.2 1269.2,318.0 1271.6,325.8 1274.0,333.5 1276.4,341.1 1278.7,348.5 1281.1,355.6 1283.5,362.4 1285.9,368.7 1288.3,374.6 1290.7,379.9 1293.1,384.6 1295.5,388.7 1297.9,392.2 1300.3,394.9 1302.6,396.9 1305.0,398.1 1307.4,398.6 1309.8,398.3 1312.2,397.3 1314.6,395.5 1317.0,392.9 1319.4,389.7 1321.8,385.7 1324.2,381.2 1326.5,376.0 1328.9,370.3 1331.3,364.0 1333.7,357.4 1336.1,350.4 1338.5,343.1 1340.9,335.5 1343.3,327.8 1345.7,320.0 1348.1,312.2 1350.4,304.4 1352.8,296.8 1355.2,289.5 1357.6,282.4" stroke="#ffff00"/><polyline points="165.0,346.1 167.4,338.7 169.8,331.0 172.2,323.2 174.6,315.4 176.9,307.6 179.3,300.0 181.7,292.5 184.1,285.3 186.5,278.3 188.9,271.8 191.3,265.8 193.7,260.2 196.1,255.3 198.5,250.9 200.8,247.2 203.2,244.2 205.6,241.9 208.0,240.3 210.4,239.5 212.8,239.5 215.2,240.2 217.6,241.7 220.0,243.9 222.4,246.9 224.7,250.6 227.1,254.9 229.5,259.8 231.9,265.3 234.3,271.3 236.7,277.8 239.1,284.7 241.5,291.9 243.9,299.4 246.3,307.0 248.6,314.8 251.0,322.6 253.4,330.4 255.8,338.0 258.2,345.5 260.6,352.8 263.0,359.7 265.4,366.2 267.8,372.2 270.2,377.8 272.5,382.8 274.9,387.1 277.3,390.8 279.7,393.8 282.1,396.1 284.5,397.7 286.9,398.5 289.3,398.5 291.7,397.8 294.1,396.3 296.4,394.0 298.8,391.1 301.2,387.4 303.6,383.1 306.0,378.2 308.4,372.7 310.8,366.6 313.2,360.2 315.6,353.3 318.0,346.1 320.3,338.6 322.7,331.0 325.1,323.2 327.5,315.4 329.9,307.6 332.3,299.9 334.7,292.5 337.1,285.2 339.5,278.3 341.9,271.8 344.2,265.8 346.6,260.2 349.0,255.2 351.4,250.9 353.8,247.2 356.2,244.1 358.6,241.9 361.0,240.3 363.4,239.5 365.8,239.5 368.1,240.2 370.5,241.7 372.9,244.0 375.3,246.9 377.7,250.6 380.1,254.9 382.5,259.8 384.9,265.3 387.3,271.4 389.7,277.8 392.0,284.7 394.4,291.9 396.8,299.4 399.2,307.1 401.6,314.8 404.0,322.6 406.4,330.4 408.8,338.1 411.2,345.6 413.6,352.8 415.9,359.7 418.3,366.2 420.7,372.3 423.1,377.8 425.5,382.8 427.9,387.1 430.3,390.8 432.7,393.9 435.1,396.2 437.5,397.7 439.8,398.5 442.2,398.5 444.6,397.8 447.0,396.3 449.4,394.0 451.8,391.1 454.2,387.4 456.6,383.1 459.0,378.2 461.4,372.6 463.7,366.6 466.1,360.1 468.5,353.3 470.9,346.1 473.3,338.6 475.7,330.9 478.1,323.2 480.5,315.3 482.9,307.6 485.3,299.9 487.6,292.4 490.0,285.2 492.4,278.3 494.8,271.8 497.2,265.7 499.6,260.2 502.0,255.2 504.4,250.9 506.8,247.1 509.2,244.1 511.5,241.8 513.9,240.3 516.3,239.5 518.7,239.5 521.1,240.2 523.5,241.7 525.9,244.0 528.3,246.9 530.7,250.6 533.1,254.9 535.4,259.9 537.8,265.4 540.2,271.4 542.6,277.9 545.0,284.8 547.4,292.0 549.8,299.4 552.2,307.1 554.6,314.9 557.0,322.7 559.3,330.4 561.7,338.1 564.1,345.6 566.5,352.8 568.9,359.7 571.3,366.2 573.7,372.3 576.1,377.8 578.5,382.8 580.9,387.2 583.2,390.9 585.6,393.9 588.0,396.2 590.4,397.7 592.8,398.5 595.2,398.5 597.6,397.8 600.0,396.3 602.4,394.0 604.8,391.1 607.1,387.4 609.5,383.1 611.9,378.1 614.3,372.6 616.7,366.6 619.1,360.1 621.5,353.2 623.9,346.0 626.3,338.6 628.7,330.9 631.0,323.1 633.4,315.3 635.8,307.5 638.2,299.9 640.6,292.4 643.0,285.2 645.4,278.3 647.8,271.8 650.2,265.7 652.6,260.2 654.9,255.2 657.3,250.8 659.7,247.1 662.1,244.1 664.5,241.8 666.9,240.3 669.3,239.5 671.7,239.5 674.1,240.2 676.5,241.7 678.8,244.0 681.2,247.0 683.6,250.6 686.0,254.9 688.4,259.9 690.8,265.4 693.2,271.4 695.6,277.9 698.0,284.8 700.4,292.0 702.7,299.5 705.1,307.1 707.5,314.9 709.9,322.7 712.3,330.5 714.7,338.1 717.1,345.6 719.5,352.9 721.9,359.7 724.3,366.3 726.6,372.3 729.0,377.8 731.4,382.8 733.8,387.2 736.2,390.9 738.6,393.9 741.0,396.2 743.4,397.7 745.8,398.5 748.2,398.5 750.5,397.8 752.9,396.3 755.3,394.0 757.7,391.0 760.1,387.4 762.5,383.1 764.9,378.1 767.3,372.6 769.7,366.6 772.1,360.1 774.4,353.2 776.8,346.0 779.2,338.5 781.6,330.9 784.0,323.1 786.4,315.3 788.8,307.5 791.2,299.8 793.6,292.4 796.0,285.1 798.3,278.2 800.7,271.7 803.1,265.7 805.5,260.1 807.9,255.2 810.3,250.8 812.7,247.1 815.1,244.1 817.5,241.8 819.9,240.3 822.2,239.5 824.6,239.5 827.0,240.2 829.4,241.7 831.8,244.0 834.2,247.0 836.6,250.6 839.0,255.0 841.4,259.9 843.8,265.4 846.1,271.4 848.5,277.9 850.9,284.8 853.3,292.0 855.7,299.5 858.1,307.1 860.5,314.9 862.9,322.7 865.3,330.5 867.7,338.2 870.0,345.7 872.4,352.9 874.8,359.8 877.2,366.3 879.6,372.3 882.0,377.9 884.4,382.8 886.8,387.2 889.2,390.9 891.6,393.9 893.9,396.2 896.3,397.7 898.7,398.5 901.1,398.5 903.5,397.8 905.9,396.3 908.3,394.0 910.7,391.0 913.1,387.4 915.5,383.0 917.8,378.1 920.2,372.6 922.6,366.5 925.0,360.1 927.4,353.2 929.8,346.0 932.2,338.5 934.6,330.8 937.0,323.1 939.4,315.2 941.7,307.5 944.1,299.8 946.5,292.3 948.9,285.1 951.3,278.2 953.7,271.7 956.1,265.7 958.5,260.1 960.9,255.2 963.3,250.8 965.6,247.1 968.0,244.1 970.4,241.8 972.8,240.3 975.2,239.5 977.6,239.5 980.0,240.2 982.4,241.8 984.8,244.0 987.2,247.0 989.5,250.7 991.9,255.0 994.3,259.9 996.7,265.4 999.1,271.5 1001.5,278.0 1003.9,284.8 1006.3,292.1 1008.7,299.5 1011.1,307.2 1013.4,315.0 1015.8,322.8 1018.2,330.5 1020.6,338.2 1023.0,345.7 1025.4,352.9 1027.8,359.8 1030.2,366.3 1032.6,372.4 1035.0,377.9 1037.3,382.9 1039.7,387.2 1042.1,390.9 1044.5,393.9 1046.9,396.2 1049.3,397.7 1051.7,398.5 1054.1,398.5 1056.5,397.8 1058.9,396.2 1061.2,394.0 1063.6,391.0 1066.0,387.3 1068.4,383.0 1070.8,378.1 1073.2,372.5 1075.6,366.5 1078.0,360.0 1080.4,353.1 1082.8,345.9 1085.1,338.5 1087.5,330.8 1089.9,323.0 1092.3,315.2 1094.7,307.4 1097.1,299.8 1099.5,292.3 1101.9,285.1 1104.3,278.2 1106.7,271.7 1109.0,265.6 1111.4,260.1 1113.8,255.1 1116.2,250.8 1118.6,247.1 1121.0,244.1 1123.4,241.8 1125.8,240.3 1128.2,239.5 1130.6,239.5 1132.9,240.2 1135.3,241.8 1137.7,244.0 1140.1,247.0 1142.5,250.7 1144.9,255.0 1147.3,259.9 1149.7,265.5 1152.1,271.5 1154.5,278.0 1156.9,284.9 1159.2,292.1 1161.6,299.6 1164.0,307.2 1166.4,315.0 1168.8,322.8 1171.2,330.6 1173.6,338.2 1176.0,345.7 1178.4,352.9 1180.8,359.8 1183.1,366.3 1185.5,372.4 1187.9,377.9 1190.3,382.9 1192.7,387.2 1195.1,390.9 1197.5,393.9 1199.9,396.2 1202.3,397.7 1204.7,398.5 1207.0,398.5 1209.4,397.8 1211.8,396.2 1214.2,394.0 1216.6,391.0 1219.0,387.3 1221.4,383.0 1223.8,378.0 1226.2,372.5 1228.6,366.5 1230.9,360.0 1233.3,353.1 1235.7,345.9 1238.1,338.4 1240.5,330.8 1242.9,323.0 1245.3,315.2 1247.7,307.4 1250.1,299.7 1252.5,292.3 1254.8,285.0 1257.2,278.2 1259.6,271.7 1262.0,265.6 1264.4,260.1 1266.8,255.1 1269.2,250.8 1271.6,247.1 1274.0,244.1 1276.4,241.8 1278.7,240.3 1281.1,239.5 1283.5,239.5 1285.9,240.2 1288.3,241.8 1290.7,244.0 1293.1,247.0 1295.5,250.7 1297.9,255.0 1300.3,260.0 1302.6,265.5 1305.0,271.5 1307.4,278.0 1309.8,284.9 1312.2,292.1 1314.6,299.6 1317.0,307.2 1319.4,315.0 1321.8,322.8 1324.2,330.6 1326.5,338.3 1328.9,345.7 1331.3,353.0 1333.7,359.9 1336.1,366.4 1338.5,372.4 1340.9,377.9 1343.3,382.9 1345.7,387.2 1348.1,390.9 1350.4,393.9 1352.8,396.2 1355.2,397.7 1357.6,398.5" stroke="#00ff00"/><polyline points="165.0,370.5 167.4,376.2 169.8,381.3 172.2,385.9 174.6,389.8 176.9,393.0 179.3,395.5 181.7,397.3 184.1,398.3 186.5,398.6 188.9,398.1 191.3,396.8 193.7,394.8 196.1,392.0 198.5,388.6 200.8,384.5 203.2,379.7 205.6,374.4 208.0,368.5 210.4,362.2 212.8,355.4 215.2,348.3 217.6,340.9 220.0,333.3 222.4,325.5 224.7,317.7 227.1,309.9 229.5,302.2 231.9,294.7 234.3,287.4 236.7,280.4 239.1,273.7 241.5,267.5 243.9,261.8 246.3,256.7 248.6,252.1 251.0,248.2 253.4,245.0 255.8,242.5 258.2,240.7 260.6,239.7 263.0,239.4 265.4,239.9 267.8,241.2 270.2,243.2 272.5,246.0 274.9,249.4 277.3,253.5 279.7,258.3 282.1,263.6 284.5,269.5 286.9,275.8 289.3,282.6 291.7,289.7 294.1,297.1 296.4,304.7 298.8,312.5 301.2,320.3 303.6,328.1 306.0,335.8 308.4,343.3 310.8,350.6 313.2,357.7 315.6,364.3 318.0,370.5 320.3,376.2 322.7,381.3 325.1,385.9 327.5,389.8 329.9,393.0 332.3,395.5 334.7,397.3 337.1,398.3 339.5,398.6 341.9,398.1 344.2,396.8 346.6,394.8 349.0,392.0 351.4,388.6 353.8,384.5 356.2,379.7 358.6,374.4 361.0,368.5 363.4,362.1 365.8,355.4 368.1,348.3 370.5,340.9 372.9,333.3 375.3,325.5 377.7,317.7 380.1,309.9 382.5,302.2 384.9,294.7 387.3,287.3 389.7,280.3 392.0,273.7 394.4,267.5 396.8,261.8 399.2,256.6 401.6,252.1 404.0,248.2 406.4,245.0 408.8,242.5 411.2,240.7 413.6,239.7 415.9,239.4 418.3,239.9 420.7,241.2 423.1,243.2 425.5,246.0 427.9,249.4 430.3,253.6 432.7,258.3 435.1,263.6 437.5,269.5 439.8,275.9 442.2,282.6 444.6,289.8 447.0,297.2 449.4,304.8 451.8,312.5 454.2,320.3 456.6,328.1 459.0,335.8 461.4,343.4 463.7,350.7 466.1,357.7 468.5,364.3 470.9,370.5 473.3,376.2 475.7,381.4 478.1,385.9 480.5,389.8 482.9,393.0 485.3,395.5 487.6,397.3 490.0,398.3 492.4,398.6 494.8,398.1 497.2,396.8 499.6,394.8 502.0,392.0 504.4,388.6 506.8,384.4 509.2,379.7 511.5,374.3 513.9,368.5 516.3,362.1 518.7,355.3 521.1,348.2 523.5,340.8 525.9,333.2 528.3,325.5 530.7,317.7 533.1,309.9 535.4,302.2 537.8,294.6 540.2,287.3 542.6,280.3 545.0,273.7 547.4,267.5 549.8,261.8 552.2,256.6 554.6,252.1 557.0,248.2 559.3,245.0 561.7,242.4 564.1,240.7 566.5,239.7 568.9,239.4 571.3,239.9 573.7,241.2 576.1,243.2 578.5,246.0 580.9,249.4 583.2,253.6 585.6,258.3 588.0,263.7 590.4,269.5 592.8,275.9 595.2,282.7 597.6,289.8 600.0,297.2 602.4,304.8 604.8,312.5 607.1,320.3 609.5,328.1 611.9,335.9 614.3,343.4 616.7,350.7 619.1,357.7 621.5,364.3 623.9,370.5 626.3,376.2 628.7,381.4 631.0,385.9 633.4,389.8 635.8,393.0 638.2,395.6 640.6,397.3 643.0,398.3 645.4,398.6 647.8,398.1 650.2,396.8 652.6,394.8 654.9,392.0 657.3,388.5 659.7,384.4 662.1,379.7 664.5,374.3 666.9,368.4 669.3,362.1 671.7,355.3 674.1,348.2 676.5,340.8 678.8,333.2 681.2,325.4 683.6,317.6 686.0,309.8 688.4,302.1 690.8,294.6 693.2,287.3 695.6,280.3 698.0,273.6 700.4,267.5 702.7,261.8 705.1,256.6 707.5,252.1 709.9,248.2 712.3,244.9 714.7,242.4 717.1,240.7 719.5,239.7 721.9,239.4 724.3,239.9 726.6,241.2 729.0,243.2 731.4,246.0 733.8,249.5 736.2,253.6 738.6,258.4 741.0,263.7 743.4,269.6 745.8,275.9 748.2,282.7 750.5,289.8 752.9,297.2 755.3,304.8 757.7,312.6 760.1,320.4 762.5,328.2 764.9,335.9 767.3,343.4 769.7,350.7 772.1,357.7 774.4,364.4 776.8,370.6 779.2,376.3 781.6,381.4 784.0,385.9 786.4,389.8 788.8,393.1 791.2,395.6 793.6,397.3 796.0,398.3 798.3,398.6 800.7,398.1 803.1,396.8 805.5,394.8 807.9,392.0 810.3,388.5 812.7,384.4 815.1,379.6 817.5,374.3 819.9,368.4 822.2,362.1 824.6,355.3 827.0,348.2 829.4,340.8 831.8,333.2 834.2,325.4 836.6,317.6 839.0,309.8 841.4,302.1 843.8,294.6 846.1,287.2 848.5,280.2 850.9,273.6 853.3,267.4 855.7,261.7 858.1,256.6 860.5,252.0 862.9,248.1 865.3,244.9 867.7,242.4 870.0,240.7 872.4,239.7 874.8,239.4 877.2,239.9 879.6,241.2 882.0,243.2 884.4,246.0 886.8,249.5 889.2,253.6 891.6,258.4 893.9,263.7 896.3,269.6 898.7,276.0 901.1,282.7 903.5,289.8 905.9,297.2 908.3,304.9 910.7,312.6 913.1,320.4 915.5,328.2 917.8,335.9 920.2,343.5 922.6,350.8 925.0,357.8 927.4,364.4 929.8,370.6 932.2,376.3 934.6,381.4 937.0,386.0 939.4,389.9 941.7,393.1 944.1,395.6 946.5,397.3 948.9,398.3 951.3,398.6 953.7,398.1 956.1,396.8 958.5,394.7 960.9,392.0 963.3,388.5 965.6,384.4 968.0,379.6 970.4,374.3 972.8,368.4 975.2,362.0 977.6,355.3 980.0,348.1 982.4,340.7 984.8,333.1 987.2,325.4 989.5,317.6 991.9,309.8 994.3,302.1 996.7,294.5 999.1,287.2 1001.5,280.2 1003.9,273.6 1006.3,267.4 1008.7,261.7 1011.1,256.6 1013.4,252.0 1015.8,248.1 1018.2,244.9 1020.6,242.4 1023.0,240.7 1025.4,239.7 1027.8,239.4 1030.2,239.9 1032.6,241.2 1035.0,243.3 1037.3,246.0 1039.7,249.5 1042.1,253.6 1044.5,258.4 1046.9,263.7 1049.3,269.6 1051.7,276.0 1054.1,282.8 1056.5,289.9 1058.9,297.3 1061.2,304.9 1063.6,312.6 1066.0,320.4 1068.4,328.2 1070.8,335.9 1073.2,343.5 1075.6,350.8 1078.0,357.8 1080.4,364.4 1082.8,370.6 1085.1,376.3 1087.5,381.4 1089.9,386.0 1092.3,389.9 1094.7,393.1 1097.1,395.6 1099.5,397.3 1101.9,398.3 1104.3,398.6 1106.7,398.1 1109.0,396.8 1111.4,394.7 1113.8,392.0 1116.2,388.5 1118.6,384.4 1121.0,379.6 1123.4,374.2 1125.8,368.4 1128.2,362.0 1130.6,355.2 1132.9,348.1 1135.3,340.7 1137.7,333.1 1140.1,325.3 1142.5,317.5 1144.9,309.7 1147.3,302.0 1149.7,294.5 1152.1,287.2 1154.5,280.2 1156.9,273.6 1159.2,267.4 1161.6,261.7 1164.0,256.5 1166.4,252.0 1168.8,248.1 1171.2,244.9 1173.6,242.4 1176.0,240.7 1178.4,239.7 1180.8,239.4 1183.1,239.9 1185.5,241.2 1187.9,243.3 1190.3,246.0 1192.7,249.5 1195.1,253.6 1197.5,258.4 1199.9,263.8 1202.3,269.7 1204.7,276.0 1207.0,282.8 1209.4,289.9 1211.8,297.3 1214.2,304.9 1216.6,312.7 1219.0,320.5 1221.4,328.3 1223.8,336.0 1226.2,343.5 1228.6,350.8 1230.9,357.8 1233.3,364.4 1235.7,370.6 1238.1,376.3 1240.5,381.5 1242.9,386.0 1245.3,389.9 1247.7,393.1 1250.1,395.6 1252.5,397.3 1254.8,398.3 1257.2,398.6 1259.6,398.1 1262.0,396.8 1264.4,394.7 1266.8,392.0 1269.2,388.5 1271.6,384.3 1274.0,379.6 1276.4,374.2 1278.7,368.3 1281.1,362.0 1283.5,355.2 1285.9,348.1 1288.3,340.7 1290.7,333.1 1293.1,325.3 1295.5,317.5 1297.9,309.7 1300.3,302.0 1302.6,294.5 1305.0,287.2 1307.4,280.2 1309.8,273.5 1312.2,267.4 1314.6,261.7 1317.0,256.5 1319.4,252.0 1321.8,248.1 1324.2,244.9 1326.5,242.4 1328.9,240.7 1331.3,239.7 1333.7,239.4 1336.1,239.9 1338.5,241.2 1340.9,243.3 1343.3,246.0 1345.7,249.5 1348.1,253.7 1350.4,258.4 1352.8,263.8 1355.2,269.7 1357.6,276.0" stroke="#ff0000"/></g><g clip-path="url(#cc)" fill="none" stroke-width="1.15" stroke-linejoin="round"><polyline points="165.0,455.0 167.4,455.9 169.8,457.2 172.2,458.8 174.6,460.7 176.9,463.0 179.3,465.6 181.7,468.4 184.1,471.5 186.5,474.8 188.9,478.3 191.3,481.9 193.7,485.7 196.1,489.5 198.5,493.4 200.8,497.3 203.2,501.1 205.6,504.9 208.0,508.6 210.4,512.1 212.8,515.5 215.2,518.6 217.6,521.6 220.0,524.2 222.4,526.6 224.7,528.6 227.1,530.3 229.5,531.7 231.9,532.7 234.3,533.3 236.7,533.6 239.1,533.5 241.5,533.0 243.9,532.1 246.3,530.8 248.6,529.2 251.0,527.3 253.4,525.0 255.8,522.4 258.2,519.6 260.6,516.5 263.0,513.2 265.4,509.7 267.8,506.1 270.2,502.3 272.5,498.5 274.9,494.6 277.3,490.7 279.7,486.9 282.1,483.1 284.5,479.4 286.9,475.9 289.3,472.5 291.7,469.3 294.1,466.4 296.4,463.8 298.8,461.4 301.2,459.4 303.6,457.6 306.0,456.3 308.4,455.3 310.8,454.7 313.2,454.4 315.6,454.5 318.0,455.0 320.3,455.9 322.7,457.2 325.1,458.8 327.5,460.7 329.9,463.0 332.3,465.6 334.7,468.4 337.1,471.5 339.5,474.8 341.9,478.3 344.2,481.9 346.6,485.7 349.0,489.5 351.4,493.4 353.8,497.3 356.2,501.1 358.6,504.9 361.0,508.6 363.4,512.1 365.8,515.5 368.1,518.7 370.5,521.6 372.9,524.2 375.3,526.6 377.7,528.6 380.1,530.4 382.5,531.7 384.9,532.7 387.3,533.3 389.7,533.6 392.0,533.5 394.4,533.0 396.8,532.1 399.2,530.8 401.6,529.2 404.0,527.3 406.4,525.0 408.8,522.4 411.2,519.6 413.6,516.5 415.9,513.2 418.3,509.7 420.7,506.1 423.1,502.3 425.5,498.5 427.9,494.6 430.3,490.7 432.7,486.9 435.1,483.1 437.5,479.4 439.8,475.9 442.2,472.5 444.6,469.3 447.0,466.4 449.4,463.8 451.8,461.4 454.2,459.4 456.6,457.6 459.0,456.3 461.4,455.3 463.7,454.7 466.1,454.4 468.5,454.5 470.9,455.1 473.3,455.9 475.7,457.2 478.1,458.8 480.5,460.8 482.9,463.0 485.3,465.6 487.6,468.4 490.0,471.5 492.4,474.8 494.8,478.3 497.2,481.9 499.6,485.7 502.0,489.5 504.4,493.4 506.8,497.3 509.2,501.2 511.5,504.9 513.9,508.6 516.3,512.2 518.7,515.5 521.1,518.7 523.5,521.6 525.9,524.2 528.3,526.6 530.7,528.6 533.1,530.4 535.4,531.7 537.8,532.7 540.2,533.3 542.6,533.6 545.0,533.5 547.4,532.9 549.8,532.1 552.2,530.8 554.6,529.2 557.0,527.2 559.3,525.0 561.7,522.4 564.1,519.6 566.5,516.5 568.9,513.2 571.3,509.7 573.7,506.0 576.1,502.3 578.5,498.5 580.9,494.6 583.2,490.7 585.6,486.8 588.0,483.1 590.4,479.4 592.8,475.8 595.2,472.5 597.6,469.3 600.0,466.4 602.4,463.8 604.8,461.4 607.1,459.3 609.5,457.6 611.9,456.3 614.3,455.3 616.7,454.7 619.1,454.4 621.5,454.5 623.9,455.1 626.3,455.9 628.7,457.2 631.0,458.8 633.4,460.8 635.8,463.0 638.2,465.6 640.6,468.4 643.0,471.5 645.4,474.8 647.8,478.3 650.2,482.0 652.6,485.7 654.9,489.6 657.3,493.4 659.7,497.3 662.1,501.2 664.5,505.0 666.9,508.6 669.3,512.2 671.7,515.5 674.1,518.7 676.5,521.6 678.8,524.3 681.2,526.6 683.6,528.7 686.0,530.4 688.4,531.7 690.8,532.7 693.2,533.4 695.6,533.6 698.0,533.5 700.4,532.9 702.7,532.1 705.1,530.8 707.5,529.2 709.9,527.2 712.3,525.0 714.7,522.4 717.1,519.6 719.5,516.5 721.9,513.2 724.3,509.7 726.6,506.0 729.0,502.3 731.4,498.4 733.8,494.6 736.2,490.7 738.6,486.8 741.0,483.0 743.4,479.4 745.8,475.8 748.2,472.5 750.5,469.3 752.9,466.4 755.3,463.7 757.7,461.4 760.1,459.3 762.5,457.6 764.9,456.3 767.3,455.3 769.7,454.6 772.1,454.4 774.4,454.5 776.8,455.1 779.2,455.9 781.6,457.2 784.0,458.8 786.4,460.8 788.8,463.0 791.2,465.6 793.6,468.5 796.0,471.5 798.3,474.8 800.7,478.3 803.1,482.0 805.5,485.7 807.9,489.6 810.3,493.5 812.7,497.3 815.1,501.2 817.5,505.0 819.9,508.6 822.2,512.2 824.6,515.5 827.0,518.7 829.4,521.6 831.8,524.3 834.2,526.6 836.6,528.7 839.0,530.4 841.4,531.7 843.8,532.7 846.1,533.4 848.5,533.6 850.9,533.5 853.3,532.9 855.7,532.0 858.1,530.8 860.5,529.2 862.9,527.2 865.3,525.0 867.7,522.4 870.0,519.5 872.4,516.4 874.8,513.1 877.2,509.7 879.6,506.0 882.0,502.3 884.4,498.4 886.8,494.5 889.2,490.7 891.6,486.8 893.9,483.0 896.3,479.3 898.7,475.8 901.1,472.4 903.5,469.3 905.9,466.4 908.3,463.7 910.7,461.4 913.1,459.3 915.5,457.6 917.8,456.3 920.2,455.3 922.6,454.6 925.0,454.4 927.4,454.5 929.8,455.1 932.2,456.0 934.6,457.2 937.0,458.8 939.4,460.8 941.7,463.1 944.1,465.6 946.5,468.5 948.9,471.6 951.3,474.9 953.7,478.4 956.1,482.0 958.5,485.8 960.9,489.6 963.3,493.5 965.6,497.4 968.0,501.2 970.4,505.0 972.8,508.7 975.2,512.2 977.6,515.6 980.0,518.7 982.4,521.6 984.8,524.3 987.2,526.6 989.5,528.7 991.9,530.4 994.3,531.7 996.7,532.7 999.1,533.4 1001.5,533.6 1003.9,533.5 1006.3,532.9 1008.7,532.0 1011.1,530.8 1013.4,529.2 1015.8,527.2 1018.2,524.9 1020.6,522.4 1023.0,519.5 1025.4,516.4 1027.8,513.1 1030.2,509.6 1032.6,506.0 1035.0,502.2 1037.3,498.4 1039.7,494.5 1042.1,490.6 1044.5,486.8 1046.9,483.0 1049.3,479.3 1051.7,475.8 1054.1,472.4 1056.5,469.3 1058.9,466.4 1061.2,463.7 1063.6,461.4 1066.0,459.3 1068.4,457.6 1070.8,456.3 1073.2,455.3 1075.6,454.6 1078.0,454.4 1080.4,454.5 1082.8,455.1 1085.1,456.0 1087.5,457.2 1089.9,458.8 1092.3,460.8 1094.7,463.1 1097.1,465.6 1099.5,468.5 1101.9,471.6 1104.3,474.9 1106.7,478.4 1109.0,482.0 1111.4,485.8 1113.8,489.6 1116.2,493.5 1118.6,497.4 1121.0,501.2 1123.4,505.0 1125.8,508.7 1128.2,512.2 1130.6,515.6 1132.9,518.7 1135.3,521.6 1137.7,524.3 1140.1,526.6 1142.5,528.7 1144.9,530.4 1147.3,531.7 1149.7,532.7 1152.1,533.4 1154.5,533.6 1156.9,533.5 1159.2,532.9 1161.6,532.0 1164.0,530.8 1166.4,529.2 1168.8,527.2 1171.2,524.9 1173.6,522.4 1176.0,519.5 1178.4,516.4 1180.8,513.1 1183.1,509.6 1185.5,506.0 1187.9,502.2 1190.3,498.4 1192.7,494.5 1195.1,490.6 1197.5,486.8 1199.9,483.0 1202.3,479.3 1204.7,475.8 1207.0,472.4 1209.4,469.3 1211.8,466.4 1214.2,463.7 1216.6,461.4 1219.0,459.3 1221.4,457.6 1223.8,456.3 1226.2,455.3 1228.6,454.6 1230.9,454.4 1233.3,454.5 1235.7,455.1 1238.1,456.0 1240.5,457.2 1242.9,458.8 1245.3,460.8 1247.7,463.1 1250.1,465.6 1252.5,468.5 1254.8,471.6 1257.2,474.9 1259.6,478.4 1262.0,482.0 1264.4,485.8 1266.8,489.6 1269.2,493.5 1271.6,497.4 1274.0,501.2 1276.4,505.0 1278.7,508.7 1281.1,512.2 1283.5,515.6 1285.9,518.7 1288.3,521.6 1290.7,524.3 1293.1,526.6 1295.5,528.7 1297.9,530.4 1300.3,531.7 1302.6,532.7 1305.0,533.4 1307.4,533.6 1309.8,533.5 1312.2,532.9 1314.6,532.0 1317.0,530.8 1319.4,529.2 1321.8,527.2 1324.2,524.9 1326.5,522.3 1328.9,519.5 1331.3,516.4 1333.7,513.1 1336.1,509.6 1338.5,506.0 1340.9,502.2 1343.3,498.4 1345.7,494.5 1348.1,490.6 1350.4,486.8 1352.8,483.0 1355.2,479.3 1357.6,475.8" stroke="#ffff00"/><polyline points="165.0,514.3 167.4,508.7 169.8,503.0 172.2,497.2 174.6,491.3 176.9,485.5 179.3,479.7 181.7,474.1 184.1,468.7 186.5,463.6 188.9,458.7 191.3,454.2 193.7,450.0 196.1,446.3 198.5,443.0 200.8,440.2 203.2,438.0 205.6,436.2 208.0,435.1 210.4,434.5 212.8,434.5 215.2,435.0 217.6,436.1 220.0,437.8 222.4,440.0 224.7,442.8 227.1,446.0 229.5,449.7 231.9,453.8 234.3,458.3 236.7,463.2 239.1,468.3 241.5,473.7 243.9,479.3 246.3,485.0 248.6,490.8 251.0,496.7 253.4,502.5 255.8,508.3 258.2,513.9 260.6,519.3 263.0,524.4 265.4,529.3 267.8,533.9 270.2,538.0 272.5,541.7 274.9,545.0 277.3,547.8 279.7,550.0 282.1,551.8 284.5,552.9 286.9,553.5 289.3,553.5 291.7,553.0 294.1,551.9 296.4,550.2 298.8,548.0 301.2,545.2 303.6,542.0 306.0,538.3 308.4,534.2 310.8,529.7 313.2,524.8 315.6,519.7 318.0,514.3 320.3,508.7 322.7,503.0 325.1,497.1 327.5,491.3 329.9,485.5 332.3,479.7 334.7,474.1 337.1,468.7 339.5,463.5 341.9,458.7 344.2,454.1 346.6,450.0 349.0,446.3 351.4,443.0 353.8,440.2 356.2,438.0 358.6,436.2 361.0,435.1 363.4,434.5 365.8,434.5 368.1,435.0 370.5,436.1 372.9,437.8 375.3,440.0 377.7,442.8 380.1,446.0 382.5,449.7 384.9,453.8 387.3,458.3 389.7,463.2 392.0,468.3 394.4,473.7 396.8,479.3 399.2,485.1 401.6,490.9 404.0,496.7 406.4,502.5 408.8,508.3 411.2,513.9 413.6,519.3 415.9,524.5 418.3,529.3 420.7,533.9 423.1,538.0 425.5,541.8 427.9,545.0 430.3,547.8 432.7,550.0 435.1,551.8 437.5,552.9 439.8,553.5 442.2,553.5 444.6,553.0 447.0,551.9 449.4,550.2 451.8,548.0 454.2,545.2 456.6,542.0 459.0,538.3 461.4,534.2 463.7,529.7 466.1,524.8 468.5,519.7 470.9,514.3 473.3,508.7 475.7,502.9 478.1,497.1 480.5,491.3 482.9,485.4 485.3,479.7 487.6,474.1 490.0,468.7 492.4,463.5 494.8,458.6 497.2,454.1 499.6,450.0 502.0,446.2 504.4,443.0 506.8,440.2 509.2,437.9 511.5,436.2 513.9,435.1 516.3,434.5 518.7,434.5 521.1,435.0 523.5,436.1 525.9,437.8 528.3,440.0 530.7,442.8 533.1,446.0 535.4,449.7 537.8,453.8 540.2,458.4 542.6,463.2 545.0,468.4 547.4,473.8 549.8,479.3 552.2,485.1 554.6,490.9 557.0,496.7 559.3,502.6 561.7,508.3 564.1,513.9 566.5,519.3 568.9,524.5 571.3,529.4 573.7,533.9 576.1,538.0 578.5,541.8 580.9,545.0 583.2,547.8 585.6,550.1 588.0,551.8 590.4,552.9 592.8,553.5 595.2,553.5 597.6,553.0 600.0,551.9 602.4,550.2 604.8,548.0 607.1,545.2 609.5,542.0 611.9,538.3 614.3,534.1 616.7,529.6 619.1,524.8 621.5,519.6 623.9,514.2 626.3,508.6 628.7,502.9 631.0,497.1 633.4,491.2 635.8,485.4 638.2,479.7 640.6,474.1 643.0,468.7 645.4,463.5 647.8,458.6 650.2,454.1 652.6,449.9 654.9,446.2 657.3,443.0 659.7,440.2 662.1,437.9 664.5,436.2 666.9,435.1 669.3,434.5 671.7,434.5 674.1,435.0 676.5,436.1 678.8,437.8 681.2,440.1 683.6,442.8 686.0,446.0 688.4,449.7 690.8,453.9 693.2,458.4 695.6,463.2 698.0,468.4 700.4,473.8 702.7,479.4 705.1,485.1 707.5,490.9 709.9,496.8 712.3,502.6 714.7,508.3 717.1,513.9 719.5,519.3 721.9,524.5 724.3,529.4 726.6,533.9 729.0,538.1 731.4,541.8 733.8,545.0 736.2,547.8 738.6,550.1 741.0,551.8 743.4,552.9 745.8,553.5 748.2,553.5 750.5,553.0 752.9,551.8 755.3,550.2 757.7,547.9 760.1,545.2 762.5,542.0 764.9,538.3 767.3,534.1 769.7,529.6 772.1,524.8 774.4,519.6 776.8,514.2 779.2,508.6 781.6,502.9 784.0,497.1 786.4,491.2 788.8,485.4 791.2,479.7 793.6,474.1 796.0,468.6 798.3,463.5 800.7,458.6 803.1,454.1 805.5,449.9 807.9,446.2 810.3,442.9 812.7,440.2 815.1,437.9 817.5,436.2 819.9,435.1 822.2,434.5 824.6,434.5 827.0,435.0 829.4,436.2 831.8,437.8 834.2,440.1 836.6,442.8 839.0,446.1 841.4,449.8 843.8,453.9 846.1,458.4 848.5,463.2 850.9,468.4 853.3,473.8 855.7,479.4 858.1,485.1 860.5,490.9 862.9,496.8 865.3,502.6 867.7,508.4 870.0,514.0 872.4,519.4 874.8,524.5 877.2,529.4 879.6,533.9 882.0,538.1 884.4,541.8 886.8,545.1 889.2,547.8 891.6,550.1 893.9,551.8 896.3,552.9 898.7,553.5 901.1,553.5 903.5,553.0 905.9,551.8 908.3,550.2 910.7,547.9 913.1,545.2 915.5,541.9 917.8,538.2 920.2,534.1 922.6,529.6 925.0,524.7 927.4,519.6 929.8,514.2 932.2,508.6 934.6,502.9 937.0,497.0 939.4,491.2 941.7,485.4 944.1,479.6 946.5,474.0 948.9,468.6 951.3,463.5 953.7,458.6 956.1,454.1 958.5,449.9 960.9,446.2 963.3,442.9 965.6,440.2 968.0,437.9 970.4,436.2 972.8,435.1 975.2,434.5 977.6,434.5 980.0,435.0 982.4,436.2 984.8,437.8 987.2,440.1 989.5,442.8 991.9,446.1 994.3,449.8 996.7,453.9 999.1,458.4 1001.5,463.3 1003.9,468.4 1006.3,473.8 1008.7,479.4 1011.1,485.2 1013.4,491.0 1015.8,496.8 1018.2,502.6 1020.6,508.4 1023.0,514.0 1025.4,519.4 1027.8,524.6 1030.2,529.4 1032.6,533.9 1035.0,538.1 1037.3,541.8 1039.7,545.1 1042.1,547.8 1044.5,550.1 1046.9,551.8 1049.3,552.9 1051.7,553.5 1054.1,553.5 1056.5,553.0 1058.9,551.8 1061.2,550.1 1063.6,547.9 1066.0,545.2 1068.4,541.9 1070.8,538.2 1073.2,534.1 1075.6,529.6 1078.0,524.7 1080.4,519.6 1082.8,514.2 1085.1,508.6 1087.5,502.8 1089.9,497.0 1092.3,491.2 1094.7,485.3 1097.1,479.6 1099.5,474.0 1101.9,468.6 1104.3,463.4 1106.7,458.6 1109.0,454.0 1111.4,449.9 1113.8,446.2 1116.2,442.9 1118.6,440.2 1121.0,437.9 1123.4,436.2 1125.8,435.1 1128.2,434.5 1130.6,434.5 1132.9,435.0 1135.3,436.2 1137.7,437.9 1140.1,440.1 1142.5,442.8 1144.9,446.1 1147.3,449.8 1149.7,453.9 1152.1,458.4 1154.5,463.3 1156.9,468.4 1159.2,473.8 1161.6,479.4 1164.0,485.2 1166.4,491.0 1168.8,496.8 1171.2,502.7 1173.6,508.4 1176.0,514.0 1178.4,519.4 1180.8,524.6 1183.1,529.4 1185.5,534.0 1187.9,538.1 1190.3,541.8 1192.7,545.1 1195.1,547.8 1197.5,550.1 1199.9,551.8 1202.3,552.9 1204.7,553.5 1207.0,553.5 1209.4,553.0 1211.8,551.8 1214.2,550.1 1216.6,547.9 1219.0,545.2 1221.4,541.9 1223.8,538.2 1226.2,534.1 1228.6,529.6 1230.9,524.7 1233.3,519.5 1235.7,514.1 1238.1,508.5 1240.5,502.8 1242.9,497.0 1245.3,491.1 1247.7,485.3 1250.1,479.6 1252.5,474.0 1254.8,468.6 1257.2,463.4 1259.6,458.5 1262.0,454.0 1264.4,449.9 1266.8,446.2 1269.2,442.9 1271.6,440.1 1274.0,437.9 1276.4,436.2 1278.7,435.1 1281.1,434.5 1283.5,434.5 1285.9,435.0 1288.3,436.2 1290.7,437.9 1293.1,440.1 1295.5,442.8 1297.9,446.1 1300.3,449.8 1302.6,453.9 1305.0,458.5 1307.4,463.3 1309.8,468.5 1312.2,473.9 1314.6,479.5 1317.0,485.2 1319.4,491.0 1321.8,496.9 1324.2,502.7 1326.5,508.4 1328.9,514.0 1331.3,519.4 1333.7,524.6 1336.1,529.5 1338.5,534.0 1340.9,538.1 1343.3,541.8 1345.7,545.1 1348.1,547.9 1350.4,550.1 1352.8,551.8 1355.2,552.9 1357.6,553.5" stroke="#00ff00"/><polyline points="165.0,545.6 167.4,551.3 169.8,556.5 172.2,561.0 174.6,565.0 176.9,568.2 179.3,570.7 181.7,572.5 184.1,573.5 186.5,573.8 188.9,573.3 191.3,572.0 193.7,570.0 196.1,567.2 198.5,563.8 200.8,559.6 203.2,554.9 205.6,549.5 208.0,543.6 210.4,537.3 212.8,530.5 215.2,523.4 217.6,515.9 220.0,508.3 222.4,500.6 224.7,492.7 227.1,484.9 229.5,477.2 231.9,469.6 234.3,462.3 236.7,455.3 239.1,448.6 241.5,442.4 243.9,436.7 246.3,431.5 248.6,426.9 251.0,423.0 253.4,419.8 255.8,417.3 258.2,415.5 260.6,414.5 263.0,414.2 265.4,414.7 267.8,416.0 270.2,418.0 272.5,420.8 274.9,424.2 277.3,428.4 279.7,433.1 282.1,438.5 284.5,444.4 286.9,450.7 289.3,457.5 291.7,464.7 294.1,472.1 296.4,479.7 298.8,487.5 301.2,495.3 303.6,503.1 306.0,510.8 308.4,518.4 310.8,525.7 313.2,532.7 315.6,539.4 318.0,545.6 320.3,551.3 322.7,556.5 325.1,561.1 327.5,565.0 329.9,568.2 332.3,570.7 334.7,572.5 337.1,573.5 339.5,573.8 341.9,573.3 344.2,572.0 346.6,570.0 349.0,567.2 351.4,563.8 353.8,559.6 356.2,554.9 358.6,549.5 361.0,543.6 363.4,537.2 365.8,530.5 368.1,523.3 370.5,515.9 372.9,508.3 375.3,500.5 377.7,492.7 380.1,484.9 382.5,477.2 384.9,469.6 387.3,462.3 389.7,455.2 392.0,448.6 394.4,442.4 396.8,436.7 399.2,431.5 401.6,426.9 404.0,423.0 406.4,419.8 408.8,417.3 411.2,415.5 413.6,414.5 415.9,414.2 418.3,414.7 420.7,416.0 423.1,418.0 425.5,420.8 427.9,424.3 430.3,428.4 432.7,433.2 435.1,438.5 437.5,444.4 439.8,450.8 442.2,457.5 444.6,464.7 447.0,472.1 449.4,479.7 451.8,487.5 454.2,495.3 456.6,503.1 459.0,510.9 461.4,518.4 463.7,525.8 466.1,532.8 468.5,539.4 470.9,545.6 473.3,551.4 475.7,556.5 478.1,561.1 480.5,565.0 482.9,568.2 485.3,570.7 487.6,572.5 490.0,573.5 492.4,573.8 494.8,573.3 497.2,572.0 499.6,570.0 502.0,567.2 504.4,563.7 506.8,559.6 509.2,554.8 511.5,549.5 513.9,543.6 516.3,537.2 518.7,530.4 521.1,523.3 523.5,515.9 525.9,508.3 528.3,500.5 530.7,492.7 533.1,484.8 535.4,477.1 537.8,469.6 540.2,462.2 542.6,455.2 545.0,448.6 547.4,442.3 549.8,436.6 552.2,431.5 554.6,426.9 557.0,423.0 559.3,419.8 561.7,417.3 564.1,415.5 566.5,414.5 568.9,414.2 571.3,414.7 573.7,416.0 576.1,418.0 578.5,420.8 580.9,424.3 583.2,428.4 585.6,433.2 588.0,438.5 590.4,444.4 592.8,450.8 595.2,457.6 597.6,464.7 600.0,472.1 602.4,479.8 604.8,487.5 607.1,495.4 609.5,503.2 611.9,510.9 614.3,518.5 616.7,525.8 619.1,532.8 621.5,539.5 623.9,545.7 626.3,551.4 628.7,556.5 631.0,561.1 633.4,565.0 635.8,568.2 638.2,570.7 640.6,572.5 643.0,573.5 645.4,573.8 647.8,573.3 650.2,572.0 652.6,570.0 654.9,567.2 657.3,563.7 659.7,559.6 662.1,554.8 664.5,549.5 666.9,543.6 669.3,537.2 671.7,530.4 674.1,523.3 676.5,515.9 678.8,508.2 681.2,500.5 683.6,492.6 686.0,484.8 688.4,477.1 690.8,469.5 693.2,462.2 695.6,455.2 698.0,448.5 700.4,442.3 702.7,436.6 705.1,431.5 707.5,426.9 709.9,423.0 712.3,419.8 714.7,417.2 717.1,415.5 719.5,414.5 721.9,414.2 724.3,414.7 726.6,416.0 729.0,418.0 731.4,420.8 733.8,424.3 736.2,428.4 738.6,433.2 741.0,438.6 743.4,444.5 745.8,450.8 748.2,457.6 750.5,464.7 752.9,472.2 755.3,479.8 757.7,487.6 760.1,495.4 762.5,503.2 764.9,510.9 767.3,518.5 769.7,525.8 772.1,532.8 774.4,539.5 776.8,545.7 779.2,551.4 781.6,556.6 784.0,561.1 786.4,565.0 788.8,568.2 791.2,570.8 793.6,572.5 796.0,573.5 798.3,573.8 800.7,573.3 803.1,572.0 805.5,569.9 807.9,567.2 810.3,563.7 812.7,559.6 815.1,554.8 817.5,549.4 819.9,543.5 822.2,537.2 824.6,530.4 827.0,523.2 829.4,515.8 831.8,508.2 834.2,500.4 836.6,492.6 839.0,484.8 841.4,477.1 843.8,469.5 846.1,462.2 848.5,455.2 850.9,448.5 853.3,442.3 855.7,436.6 858.1,431.4 860.5,426.9 862.9,423.0 865.3,419.7 867.7,417.2 870.0,415.5 872.4,414.5 874.8,414.2 877.2,414.7 879.6,416.0 882.0,418.1 884.4,420.8 886.8,424.3 889.2,428.4 891.6,433.2 893.9,438.6 896.3,444.5 898.7,450.8 901.1,457.6 903.5,464.8 905.9,472.2 908.3,479.8 910.7,487.6 913.1,495.4 915.5,503.2 917.8,511.0 920.2,518.5 922.6,525.8 925.0,532.9 927.4,539.5 929.8,545.7 932.2,551.4 934.6,556.6 937.0,561.1 939.4,565.0 941.7,568.3 944.1,570.8 946.5,572.5 948.9,573.5 951.3,573.8 953.7,573.3 956.1,572.0 958.5,569.9 960.9,567.2 963.3,563.7 965.6,559.5 968.0,554.8 970.4,549.4 972.8,543.5 975.2,537.1 977.6,530.3 980.0,523.2 982.4,515.8 984.8,508.2 987.2,500.4 989.5,492.6 991.9,484.8 994.3,477.0 996.7,469.5 999.1,462.1 1001.5,455.1 1003.9,448.5 1006.3,442.3 1008.7,436.6 1011.1,431.4 1013.4,426.9 1015.8,423.0 1018.2,419.7 1020.6,417.2 1023.0,415.5 1025.4,414.5 1027.8,414.2 1030.2,414.7 1032.6,416.0 1035.0,418.1 1037.3,420.8 1039.7,424.3 1042.1,428.5 1044.5,433.2 1046.9,438.6 1049.3,444.5 1051.7,450.9 1054.1,457.7 1056.5,464.8 1058.9,472.2 1061.2,479.9 1063.6,487.6 1066.0,495.5 1068.4,503.3 1070.8,511.0 1073.2,518.6 1075.6,525.9 1078.0,532.9 1080.4,539.5 1082.8,545.7 1085.1,551.4 1087.5,556.6 1089.9,561.1 1092.3,565.1 1094.7,568.3 1097.1,570.8 1099.5,572.5 1101.9,573.5 1104.3,573.8 1106.7,573.3 1109.0,572.0 1111.4,569.9 1113.8,567.2 1116.2,563.7 1118.6,559.5 1121.0,554.7 1123.4,549.4 1125.8,543.5 1128.2,537.1 1130.6,530.3 1132.9,523.2 1135.3,515.8 1137.7,508.1 1140.1,500.4 1142.5,492.5 1144.9,484.7 1147.3,477.0 1149.7,469.4 1152.1,462.1 1154.5,455.1 1156.9,448.5 1159.2,442.2 1161.6,436.5 1164.0,431.4 1166.4,426.8 1168.8,422.9 1171.2,419.7 1173.6,417.2 1176.0,415.5 1178.4,414.5 1180.8,414.2 1183.1,414.7 1185.5,416.0 1187.9,418.1 1190.3,420.9 1192.7,424.3 1195.1,428.5 1197.5,433.3 1199.9,438.6 1202.3,444.5 1204.7,450.9 1207.0,457.7 1209.4,464.8 1211.8,472.3 1214.2,479.9 1216.6,487.7 1219.0,495.5 1221.4,503.3 1223.8,511.0 1226.2,518.6 1228.6,525.9 1230.9,532.9 1233.3,539.6 1235.7,545.8 1238.1,551.5 1240.5,556.6 1242.9,561.2 1245.3,565.1 1247.7,568.3 1250.1,570.8 1252.5,572.5 1254.8,573.5 1257.2,573.8 1259.6,573.3 1262.0,572.0 1264.4,569.9 1266.8,567.1 1269.2,563.7 1271.6,559.5 1274.0,554.7 1276.4,549.4 1278.7,543.5 1281.1,537.1 1283.5,530.3 1285.9,523.1 1288.3,515.7 1290.7,508.1 1293.1,500.3 1295.5,492.5 1297.9,484.7 1300.3,477.0 1302.6,469.4 1305.0,462.1 1307.4,455.1 1309.8,448.4 1312.2,442.2 1314.6,436.5 1317.0,431.4 1319.4,426.8 1321.8,422.9 1324.2,419.7 1326.5,417.2 1328.9,415.5 1331.3,414.5 1333.7,414.2 1336.1,414.7 1338.5,416.0 1340.9,418.1 1343.3,420.9 1345.7,424.3 1348.1,428.5 1350.4,433.3 1352.8,438.7 1355.2,444.6 1357.6,450.9" stroke="#ff0000"/></g><path d="M158 268.5H172M158 320.5H172M158 371.5H172M158 413.5H172M158 441.5H172M158 469.5H172M158 497.5H172M158 525.5H172M158 553.5H172M158 582.5H165M234.5 574V591M342.5 574V591M450.5 574V591M557.5 574V591M665.5 574V591M772.5 574V591M880.5 574V591M988.5 574V591M1095.5 574V591M1203.5 574V591M1310.5 574V591" stroke="#000" stroke-width="1.2" fill="none"/><g font-family="Liberation Sans,sans-serif" font-size="16" text-anchor="end" fill="#000"><text x="156" y="274.3">200.0</text><text x="156" y="326.3">0.0</text><text x="156" y="377.3"><tspan textLength="8.600" lengthAdjust="spacingAndGlyphs">-</tspan>200.0</text><text x="156" y="419.0">3</text><text x="156" y="447.1">2</text><text x="156" y="475.1">1</text><text x="156" y="503.2">0</text><text x="156" y="531.2"><tspan textLength="8.600" lengthAdjust="spacingAndGlyphs">-</tspan>1</text><text x="156" y="559.2"><tspan textLength="8.600" lengthAdjust="spacingAndGlyphs">-</tspan>2</text><text x="156" y="587.3"><tspan textLength="8.600" lengthAdjust="spacingAndGlyphs">-</tspan>3</text></g><g font-family="Noto Serif CJK SC,Liberation Serif,serif" fill="#000"><text x="718.500" y="222.500" font-size="25" text-anchor="middle">波形数据曲线</text><text transform="translate(102.500 319) rotate(-90)" font-size="21.5" text-anchor="middle">电压波形</text><text transform="translate(102.500 493) rotate(-90)" font-size="21.5" text-anchor="middle">电流波形</text></g></svg><div class="a mono" style="left:76px;top:201px;width:52px;height:14px;box-sizing:border-box;background:#fff;border:1px solid;border-color:#fff #808080 #808080 #fff;font-size:11px;line-height:12px;text-align:center;letter-spacing:-.6px">100%</div><div class="a" style="left:76px;top:647px;width:1288px;height:18px;background:#f0f0f0;border-top:1px solid #fff;box-sizing:border-box"></div><svg class="a" style="left:81px;top:652px" width="4" height="7" viewBox="0 0 4 7"><path d="M4 0V7L0 3.500z" fill="#444"/></svg><svg class="a" style="left:1354px;top:652px" width="4" height="7" viewBox="0 0 4 7"><path d="M0 0V7L4 3.500z" fill="#444"/></svg><div class="a" style="left:1331px;top:649px;width:15px;height:13px;box-sizing:border-box;border:1px solid #9a9a9a;border-radius:2px;background:linear-gradient(180deg,#f4f4f4,#d8d8d8)"></div><div class="a" style="left:1366px;top:203px;width:139px;height:463px;box-sizing:border-box;background:#c8c8c8;border:1px solid;border-color:#fff #9a9a9a #9a9a9a #fff"></div><div class="a" style="left:1403px;top:297px;width:27px;height:52px;background:#b9b9b9"></div><div class="a" style="left:1369px;top:233.0px;width:21px;height:3px;background:#ffff00"></div><div class="a" style="left:1389px;top:229px;width:13px;height:13px;box-sizing:border-box;background:#fff;border:1px solid;border-color:#808080 #f4f4f4 #f4f4f4 #808080;box-shadow:inset 1px 1px 0 #404040"></div><svg class="a" style="left:1391px;top:231px" width="9" height="9" viewBox="0 0 9 9"><path d="M1 3.500 L3.500 6 L8 1.200" stroke="#000" stroke-width="1.900" fill="none"/></svg><div class="a" style="left:1430px;top:229px;width:64px;height:13px;background:#f0f0f0"></div><div class="a mono" style="left:1406px;top:231px;width:24px;font-size:13px;line-height:14px;color:#101050;letter-spacing:-1.2px">U1:</div><div class="a mono" style="left:1430px;top:230px;width:64px;font-size:13px;line-height:14px;color:#400040;font-weight:bold;text-align:right;letter-spacing:.1px">-95.08</div><div class="a" style="left:1369px;top:249.1px;width:21px;height:3px;background:#00ff00"></div><div class="a" style="left:1389px;top:245px;width:13px;height:13px;box-sizing:border-box;background:#fff;border:1px solid;border-color:#808080 #f4f4f4 #f4f4f4 #808080;box-shadow:inset 1px 1px 0 #404040"></div><svg class="a" style="left:1391px;top:247px" width="9" height="9" viewBox="0 0 9 9"><path d="M1 3.500 L3.500 6 L8 1.200" stroke="#000" stroke-width="1.900" fill="none"/></svg><div class="a" style="left:1430px;top:245px;width:64px;height:13px;background:#f0f0f0"></div><div class="a mono" style="left:1406px;top:247px;width:24px;font-size:13px;line-height:14px;color:#101050;letter-spacing:-1.2px">U2:</div><div class="a mono" style="left:1430px;top:246px;width:64px;font-size:13px;line-height:14px;color:#400040;font-weight:bold;text-align:right;letter-spacing:.1px">-211.29</div><div class="a" style="left:1369px;top:265.2px;width:21px;height:3px;background:#ff0000"></div><div class="a" style="left:1389px;top:261px;width:13px;height:13px;box-sizing:border-box;background:#fff;border:1px solid;border-color:#808080 #f4f4f4 #f4f4f4 #808080;box-shadow:inset 1px 1px 0 #404040"></div><svg class="a" style="left:1391px;top:263px" width="9" height="9" viewBox="0 0 9 9"><path d="M1 3.500 L3.500 6 L8 1.200" stroke="#000" stroke-width="1.900" fill="none"/></svg><div class="a" style="left:1430px;top:263px;width:64px;height:13px;background:#f0f0f0"></div><div class="a mono" style="left:1406px;top:263px;width:24px;font-size:13px;line-height:14px;color:#101050;letter-spacing:-1.2px">U3:</div><div class="a mono" style="left:1430px;top:264px;width:64px;font-size:13px;line-height:14px;color:#400040;font-weight:bold;text-align:right;letter-spacing:.1px">304.36</div><div class="a" style="left:1369px;top:305.2px;width:21px;height:2px;background:#ffff00"></div><div class="a" style="left:1389px;top:297px;width:13px;height:13px;box-sizing:border-box;background:#fff;border:1px solid;border-color:#808080 #f4f4f4 #f4f4f4 #808080;box-shadow:inset 1px 1px 0 #404040"></div><svg class="a" style="left:1391px;top:299px" width="9" height="9" viewBox="0 0 9 9"><path d="M1 3.500 L3.500 6 L8 1.200" stroke="#000" stroke-width="1.900" fill="none"/></svg><div class="a" style="left:1430px;top:301px;width:64px;height:13px;background:#f0f0f0"></div><div class="a mono" style="left:1406px;top:299px;width:24px;font-size:13px;line-height:14px;color:#101050;letter-spacing:-1.2px">I1:</div><div class="a mono" style="left:1430px;top:302px;width:64px;font-size:13px;line-height:14px;color:#400040;font-weight:bold;text-align:right;letter-spacing:.1px">-0.43</div><div class="a" style="left:1369px;top:321.0px;width:21px;height:2px;background:#00ff00"></div><div class="a" style="left:1389px;top:316px;width:13px;height:13px;box-sizing:border-box;background:#fff;border:1px solid;border-color:#808080 #f4f4f4 #f4f4f4 #808080;box-shadow:inset 1px 1px 0 #404040"></div><svg class="a" style="left:1391px;top:318px" width="9" height="9" viewBox="0 0 9 9"><path d="M1 3.500 L3.500 6 L8 1.200" stroke="#000" stroke-width="1.900" fill="none"/></svg><div class="a" style="left:1430px;top:317px;width:64px;height:13px;background:#f0f0f0"></div><div class="a mono" style="left:1406px;top:318px;width:24px;font-size:13px;line-height:14px;color:#101050;letter-spacing:-1.2px">I2:</div><div class="a mono" style="left:1430px;top:318px;width:64px;font-size:13px;line-height:14px;color:#400040;font-weight:bold;text-align:right;letter-spacing:.1px">-1.45</div><div class="a" style="left:1369px;top:337.0px;width:21px;height:2px;background:#ff0000"></div><div class="a" style="left:1389px;top:334px;width:13px;height:13px;box-sizing:border-box;background:#fff;border:1px solid;border-color:#808080 #f4f4f4 #f4f4f4 #808080;box-shadow:inset 1px 1px 0 #404040"></div><svg class="a" style="left:1391px;top:336px" width="9" height="9" viewBox="0 0 9 9"><path d="M1 3.500 L3.500 6 L8 1.200" stroke="#000" stroke-width="1.900" fill="none"/></svg><div class="a" style="left:1430px;top:333px;width:64px;height:13px;background:#f0f0f0"></div><div class="a mono" style="left:1406px;top:336px;width:24px;font-size:13px;line-height:14px;color:#101050;letter-spacing:-1.2px">I3:</div><div class="a mono" style="left:1430px;top:334px;width:64px;font-size:13px;line-height:14px;color:#400040;font-weight:bold;text-align:right;letter-spacing:.1px">2.75</div><div class="a" style="left:1506px;top:203px;width:1px;height:859px;background:#fff"></div><div class="a" style="left:1510px;top:203px;width:169px;height:858px;box-sizing:border-box;background:#d4d0c8;border:1px solid;border-color:#6a6a6a #fff #fff #8c8c8c;box-shadow:inset 0 1px 0 #555"></div><div class="a" style="left:1679px;top:207px;width:86px;height:853px;box-sizing:border-box;border:1px solid;border-color:#b4b4b4 #b4b4b4 #fff #f0f0f0;box-shadow:inset 0 1px 0 #fff"></div><div class="a" style="left:1529px;top:261px;width:13px;height:13px;box-sizing:border-box;background:#fff;border:1px solid;border-color:#808080 #f4f4f4 #f4f4f4 #808080;box-shadow:inset 1px 1px 0 #404040"></div><div class="a" style="left:1529px;top:282px;width:13px;height:13px;box-sizing:border-box;background:#fff;border:1px solid;border-color:#808080 #f4f4f4 #f4f4f4 #808080;box-shadow:inset 1px 1px 0 #404040"></div><svg class="a" style="left:1531px;top:284px" width="9" height="9" viewBox="0 0 9 9"><path d="M1 3.500 L3.500 6 L8 1.200" stroke="#000" stroke-width="1.900" fill="none"/></svg><div class="a sans" style="left:1546px;top:260px;color:#8b3a3a;font-weight:bold;font-size:13px;line-height:16px;white-space:nowrap">逆序读数据</div><div class="a sans" style="left:1546px;top:281px;color:#000;font-weight:bold;font-size:13px;line-height:16px;white-space:nowrap">动态显示波形</div><div class="a" style="left:1531px;top:305px;width:129px;height:65px;box-sizing:border-box;background:#f0f0f0;border:1px solid #000;box-shadow:inset 1px 1px 0 #fff, inset -1px -1px 0 #696969, inset -2px -2px 0 #a0a0a0"></div><svg class="a" style="left:1560px;top:307px" width="70" height="42" viewBox="0 0 70 42">
<defs><linearGradient id="bg1" x1="0" y1="0" x2="1" y2="1"><stop offset="0" stop-color="#7dff6a"/><stop offset=".5" stop-color="#25d82a"/><stop offset="1" stop-color="#0f9a18"/></linearGradient>
<linearGradient id="yc" gradientUnits="userSpaceOnUse" x1="0" y1="4" x2="0" y2="38"><stop offset="0" stop-color="#8a8012"/><stop offset=".5" stop-color="#b8a614"/><stop offset=".8" stop-color="#e8cc18"/><stop offset="1" stop-color="#ffe61a"/></linearGradient><linearGradient id="br1" x1="0" y1="0" x2="1" y2="1"><stop offset="0" stop-color="#ff8a8a"/><stop offset=".5" stop-color="#f0181c"/><stop offset="1" stop-color="#b00810"/></linearGradient></defs>
<path d="M13 30 V35.500 Q13 38 16 38 H28 Q31 38 31 35 V24 Q31 21.500 33 20 L36.500 17.500 Q38.500 16 38.500 13 V7 Q38.500 4 41.500 4 H50 Q53 4 53 7 V14" fill="none" stroke="#6e6410" stroke-width="5.500" stroke-linejoin="round" opacity=".55"/>
<path d="M13 30 V35.500 Q13 38 16 38 H28 Q31 38 31 35 V24 Q31 21.500 33 20 L36.500 17.500 Q38.500 16 38.500 13 V7 Q38.500 4 41.500 4 H50 Q53 4 53 7 V14" fill="none" stroke="url(#yc)" stroke-width="4.200" stroke-linejoin="round"/>
<path d="M13 31 V35 Q13 37.500 16 37.500 H24" fill="none" stroke="#ffe81c" stroke-width="3"/><path d="M13 29.500 V32" stroke="#f08a10" stroke-width="3"/>
<path d="M6 4.500 H20 L24.500 8 V29 L21 32 H6 L2.500 29 V8 Z" fill="url(#bg1)" stroke="#2cb030" stroke-width=".8"/>
<path d="M7 14.500h12M7 19h12M7 23.500h12" stroke="#0a7a18" stroke-width="2"/>
<path d="M49 13 H63 L67 16.500 V37 L63.500 40.500 H49 L45.500 37 V16.500 Z" fill="url(#br1)" stroke="#c82028" stroke-width=".8"/>
<path d="M50 22.500h12M50 27h12M50 31.500h12" stroke="#8a0010" stroke-width="2"/>
</svg><div class="a sans" style="left:1529px;top:349.500px;width:130px;text-align:center;font-weight:bold;font-size:15px;line-height:19px;letter-spacing:0">召测数据</div><div class="a" style="left:1529px;top:463px;width:129px;height:65px;box-sizing:border-box;background:#fff;border:1px solid;border-color:#f4f4f4 #808080 #808080 #f4f4f4;box-shadow:inset -1px -1px 0 #a0a0a0"></div><svg class="a" style="left:1570px;top:464px" width="50" height="50" viewBox="0 0 50 50">
<path d="M3 2 H34 L46 26 L25 37 L13 24 Z" fill="#ececec" stroke="#222" stroke-width="1"/>
<path d="M3 2 H34 L37.500 9 L7 9 Z" fill="#b0b0b0" stroke="#222" stroke-width=".7"/>
<path d="M7 9 L37.500 9 M9.500 13.500 L40 13.500 M12 18 L42 18 M14.500 22.500 L44 22.500 M17 27.500 L40 29 M14 2 L30 34 M25 2 L40 29.500" stroke="#b4b4b4" stroke-width="1" fill="none"/>
<path d="M2 23.500 H9 L24 39 H17 Z" fill="#18a8a0" stroke="#083830" stroke-width=".8"/>
<path d="M17 23.500 H24 L9 39 H2 Z" fill="#50e0e0" stroke="#083830" stroke-width=".8"/>
<path d="M2 39.500 H24" stroke="#111" stroke-width="1.200"/>
<path d="M28 40 L32 38 L33 43 L29 45 Z" fill="#ff30ff"/><path d="M33 41 L38 37 L40 44 L35 48 Z" fill="#1010f0"/><path d="M41 36 L46 33 L44 40 L40 47 L37 47 Z" fill="#f01010"/>
</svg><div class="a sans" style="left:1529px;top:507.500px;width:129px;text-align:center;font-weight:bold;font-size:14px;line-height:18px;white-space:nowrap">保存为<span class="mono" style="font-size:13px;letter-spacing:0">Excel</span></div><div class="a" style="left:76px;top:665px;width:1427px;height:17px;background:#f0f0f0;border-top:1px solid #808080;box-sizing:border-box"></div><div class="a" style="left:76px;top:666px;width:15px;height:16px;box-sizing:border-box;background:#f0f0f0;border:1px solid;border-color:#fff #696969 #696969 #fff;box-shadow:inset -1px -1px 0 #a0a0a0"></div><svg class="a" style="left:81px;top:669px" width="5" height="9" viewBox="0 0 5 9"><path d="M5 0V9L0 4.500z" fill="#000"/></svg><div class="a" style="left:93px;top:666px;width:15px;height:16px;box-sizing:border-box;background:#f0f0f0;border:1px solid;border-color:#fff #696969 #696969 #fff;box-shadow:inset -1px -1px 0 #a0a0a0"></div><svg class="a" style="left:98px;top:669px" width="5" height="9" viewBox="0 0 5 9"><path d="M0 0V9L5 4.500z" fill="#000"/></svg><svg class="a" style="left:108px;top:665px" width="250" height="18" viewBox="0 0 250 18"><path d="M2 17 L10 2.500 H237 L246 17" fill="#fff" stroke="#000" stroke-width="1"/></svg><div class="a" style="left:123px;top:665px;width:216px;font-size:15px;line-height:17px;white-space:nowrap;font-family:'Liberation Sans','Noto Serif CJK SC',sans-serif" id="tabtxt">2021年12月21日&nbsp; 13时46分29秒</div><div class="a" style="left:76px;top:682px;width:1408px;height:358px;background:#e0e0e0"></div><div class="a" style="left:76px;top:682px;width:1310px;height:16px;background:#f0f0f0"></div><div class="a" style="left:76px;top:682px;width:108px;height:357px;background:#f0f0f0"></div><div class="a" style="left:184px;top:698px;width:1202px;height:341px;background:#fff"></div><div class="a" style="left:183px;top:682px;width:1px;height:357px;background:#c0c0c0"></div><div class="a" style="left:407px;top:682px;width:1px;height:357px;background:#c0c0c0"></div><div class="a" style="left:570px;top:682px;width:1px;height:357px;background:#c0c0c0"></div><div class="a" style="left:733px;top:682px;width:1px;height:357px;background:#c0c0c0"></div><div class="a" style="left:896px;top:682px;width:1px;height:357px;background:#c0c0c0"></div><div class="a" style="left:1059px;top:682px;width:1px;height:357px;background:#c0c0c0"></div><div class="a" style="left:1222px;top:682px;width:1px;height:357px;background:#c0c0c0"></div><div class="a" style="left:1385px;top:682px;width:1px;height:357px;background:#c0c0c0"></div><div class="a" style="left:184px;top:682px;width:1px;height:15px;background:#fff"></div><div class="a" style="left:408px;top:682px;width:1px;height:15px;background:#fff"></div><div class="a" style="left:571px;top:682px;width:1px;height:15px;background:#fff"></div><div class="a" style="left:734px;top:682px;width:1px;height:15px;background:#fff"></div><div class="a" style="left:897px;top:682px;width:1px;height:15px;background:#fff"></div><div class="a" style="left:1060px;top:682px;width:1px;height:15px;background:#fff"></div><div class="a" style="left:1223px;top:682px;width:1px;height:15px;background:#fff"></div><div class="a" style="left:76px;top:697px;width:1310px;height:1px;background:#c0c0c0"></div><div class="a" style="left:76px;top:697px;width:108px;height:1px;background:#a8a8a8"></div><div class="a" style="left:76px;top:715px;width:1310px;height:1px;background:#c0c0c0"></div><div class="a" style="left:76px;top:715px;width:108px;height:1px;background:#a8a8a8"></div><div class="a" style="left:76px;top:732px;width:1310px;height:1px;background:#c0c0c0"></div><div class="a" style="left:76px;top:732px;width:108px;height:1px;background:#a8a8a8"></div><div class="a" style="left:76px;top:749px;width:1310px;height:1px;background:#c0c0c0"></div><div class="a" style="left:76px;top:749px;width:108px;height:1px;background:#a8a8a8"></div><div class="a" style="left:76px;top:766px;width:1310px;height:1px;background:#c0c0c0"></div><div class="a" style="left:76px;top:766px;width:108px;height:1px;background:#a8a8a8"></div><div class="a" style="left:76px;top:783px;width:1310px;height:1px;background:#c0c0c0"></div><div class="a" style="left:76px;top:783px;width:108px;height:1px;background:#a8a8a8"></div><div class="a" style="left:76px;top:800px;width:1310px;height:1px;background:#c0c0c0"></div><div class="a" style="left:76px;top:800px;width:108px;height:1px;background:#a8a8a8"></div><div class="a" style="left:76px;top:817px;width:1310px;height:1px;background:#c0c0c0"></div><div class="a" style="left:76px;top:817px;width:108px;height:1px;background:#a8a8a8"></div><div class="a" style="left:76px;top:834px;width:1310px;height:1px;background:#c0c0c0"></div><div class="a" style="left:76px;top:834px;width:108px;height:1px;background:#a8a8a8"></div><div class="a" style="left:76px;top:851px;width:1310px;height:1px;background:#c0c0c0"></div><div class="a" style="left:76px;top:851px;width:108px;height:1px;background:#a8a8a8"></div><div class="a" style="left:76px;top:868px;width:1310px;height:1px;background:#c0c0c0"></div><div class="a" style="left:76px;top:868px;width:108px;height:1px;background:#a8a8a8"></div><div class="a" style="left:76px;top:885px;width:1310px;height:1px;background:#c0c0c0"></div><div class="a" style="left:76px;top:885px;width:108px;height:1px;background:#a8a8a8"></div><div class="a" style="left:76px;top:902px;width:1310px;height:1px;background:#c0c0c0"></div><div class="a" style="left:76px;top:902px;width:108px;height:1px;background:#a8a8a8"></div><div class="a" style="left:76px;top:919px;width:1310px;height:1px;background:#c0c0c0"></div><div class="a" style="left:76px;top:919px;width:108px;height:1px;background:#a8a8a8"></div><div class="a" style="left:76px;top:936px;width:1310px;height:1px;background:#c0c0c0"></div><div class="a" style="left:76px;top:936px;width:108px;height:1px;background:#a8a8a8"></div><div class="a" style="left:76px;top:953px;width:1310px;height:1px;background:#c0c0c0"></div><div class="a" style="left:76px;top:953px;width:108px;height:1px;background:#a8a8a8"></div><div class="a" style="left:76px;top:970px;width:1310px;height:1px;background:#c0c0c0"></div><div class="a" style="left:76px;top:970px;width:108px;height:1px;background:#a8a8a8"></div><div class="a" style="left:76px;top:987px;width:1310px;height:1px;background:#c0c0c0"></div><div class="a" style="left:76px;top:987px;width:108px;height:1px;background:#a8a8a8"></div><div class="a" style="left:76px;top:1004px;width:1310px;height:1px;background:#c0c0c0"></div><div class="a" style="left:76px;top:1004px;width:108px;height:1px;background:#a8a8a8"></div><div class="a" style="left:76px;top:1021px;width:1310px;height:1px;background:#c0c0c0"></div><div class="a" style="left:76px;top:1021px;width:108px;height:1px;background:#a8a8a8"></div><div class="a" style="left:76px;top:1038px;width:1310px;height:1px;background:#c0c0c0"></div><div class="a" style="left:76px;top:1038px;width:108px;height:1px;background:#a8a8a8"></div><div class="a" style="left:76px;top:1038px;width:1310px;height:1px;background:#c0c0c0"></div><div class="a" style="left:76px;top:1038px;width:108px;height:1px;background:#a8a8a8"></div><div class="a" style="left:76px;top:698px;width:107px;height:1px;background:#fff"></div><div class="a" style="left:76px;top:716px;width:107px;height:1px;background:#fff"></div><div class="a" style="left:76px;top:733px;width:107px;height:1px;background:#fff"></div><div class="a" style="left:76px;top:750px;width:107px;height:1px;background:#fff"></div><div class="a" style="left:76px;top:767px;width:107px;height:1px;background:#fff"></div><div class="a" style="left:76px;top:784px;width:107px;height:1px;background:#fff"></div><div class="a" style="left:76px;top:801px;width:107px;height:1px;background:#fff"></div><div class="a" style="left:76px;top:818px;width:107px;height:1px;background:#fff"></div><div class="a" style="left:76px;top:835px;width:107px;height:1px;background:#fff"></div><div class="a" style="left:76px;top:852px;width:107px;height:1px;background:#fff"></div><div class="a" style="left:76px;top:869px;width:107px;height:1px;background:#fff"></div><div class="a" style="left:76px;top:886px;width:107px;height:1px;background:#fff"></div><div class="a" style="left:76px;top:903px;width:107px;height:1px;background:#fff"></div><div class="a" style="left:76px;top:920px;width:107px;height:1px;background:#fff"></div><div class="a" style="left:76px;top:937px;width:107px;height:1px;background:#fff"></div><div class="a" style="left:76px;top:954px;width:107px;height:1px;background:#fff"></div><div class="a" style="left:76px;top:971px;width:107px;height:1px;background:#fff"></div><div class="a" style="left:76px;top:988px;width:107px;height:1px;background:#fff"></div><div class="a" style="left:76px;top:1005px;width:107px;height:1px;background:#fff"></div><div class="a" style="left:76px;top:1022px;width:107px;height:1px;background:#fff"></div><div class="a" style="left:76px;top:1039px;width:107px;height:1px;background:#fff"></div><div class="a" style="left:76px;top:682px;width:108px;height:357px;background:none;border-right:1px solid #a0a0a0;box-sizing:border-box"></div><div class="a" style="left:184px;top:715px;width:1202px;height:2px;background:#000"></div><div class="a" style="left:1385px;top:698px;width:1px;height:341px;background:#303030"></div><div class="a serif" style="left:76px;top:698px;width:106px;height:18px;line-height:18px;text-align:center;font-weight:bold;font-size:13.500px;letter-spacing:.4px">1</div><div class="a serif" style="left:76px;top:716px;width:106px;height:17px;line-height:17px;text-align:center;font-weight:bold;font-size:13.500px;letter-spacing:.4px">2</div><div class="a serif" style="left:76px;top:733px;width:106px;height:17px;line-height:17px;text-align:center;font-weight:bold;font-size:13.500px;letter-spacing:.4px">3</div><div class="a serif" style="left:76px;top:750px;width:106px;height:17px;line-height:17px;text-align:center;font-weight:bold;font-size:13.500px;letter-spacing:.4px">4</div><div class="a serif" style="left:76px;top:767px;width:106px;height:17px;line-height:17px;text-align:center;font-weight:bold;font-size:13.500px;letter-spacing:.4px">5</div><div class="a serif" style="left:76px;top:784px;width:106px;height:17px;line-height:17px;text-align:center;font-weight:bold;font-size:13.500px;letter-spacing:.4px">6</div><div class="a serif" style="left:76px;top:801px;width:106px;height:17px;line-height:17px;text-align:center;font-weight:bold;font-size:13.500px;letter-spacing:.4px">7</div><div class="a serif" style="left:76px;top:818px;width:106px;height:17px;line-height:17px;text-align:center;font-weight:bold;font-size:13.500px;letter-spacing:.4px">8</div><div class="a serif" style="left:76px;top:835px;width:106px;height:17px;line-height:17px;text-align:center;font-weight:bold;font-size:13.500px;letter-spacing:.4px">9</div><div class="a serif" style="left:76px;top:852px;width:106px;height:17px;line-height:17px;text-align:center;font-weight:bold;font-size:13.500px;letter-spacing:.4px">10</div><div class="a serif" style="left:76px;top:869px;width:106px;height:17px;line-height:17px;text-align:center;font-weight:bold;font-size:13.500px;letter-spacing:.4px">11</div><div class="a serif" style="left:76px;top:886px;width:106px;height:17px;line-height:17px;text-align:center;font-weight:bold;font-size:13.500px;letter-spacing:.4px">12</div><div class="a serif" style="left:76px;top:903px;width:106px;height:17px;line-height:17px;text-align:center;font-weight:bold;font-size:13.500px;letter-spacing:.4px">13</div><div class="a serif" style="left:76px;top:920px;width:106px;height:17px;line-height:17px;text-align:center;font-weight:bold;font-size:13.500px;letter-spacing:.4px">14</div><div class="a serif" style="left:76px;top:937px;width:106px;height:17px;line-height:17px;text-align:center;font-weight:bold;font-size:13.500px;letter-spacing:.4px">15</div><div class="a serif" style="left:76px;top:954px;width:106px;height:17px;line-height:17px;text-align:center;font-weight:bold;font-size:13.500px;letter-spacing:.4px">16</div><div class="a serif" style="left:76px;top:971px;width:106px;height:17px;line-height:17px;text-align:center;font-weight:bold;font-size:13.500px;letter-spacing:.4px">17</div><div class="a serif" style="left:76px;top:988px;width:106px;height:17px;line-height:17px;text-align:center;font-weight:bold;font-size:13.500px;letter-spacing:.4px">18</div><div class="a serif" style="left:76px;top:1005px;width:106px;height:17px;line-height:17px;text-align:center;font-weight:bold;font-size:13.500px;letter-spacing:.4px">19</div><div class="a serif" style="left:76px;top:1022px;width:106px;height:17px;line-height:17px;text-align:center;font-weight:bold;font-size:13.500px;letter-spacing:.4px">20</div><div class="a" style="left:184px;top:699px;width:224px;height:16px;line-height:16px;text-align:center;font-size:13.33px;font-family:'Noto Serif CJK SC',serif;white-space:nowrap">时间</div><div class="a" style="left:408px;top:699px;width:163px;height:16px;line-height:16px;text-align:center;font-size:13.33px;font-family:'Noto Serif CJK SC',serif;white-space:nowrap"><span style="font-family:'Liberation Mono',monospace;letter-spacing:-1.13px">A</span>相电压</div><div class="a" style="left:571px;top:699px;width:163px;height:16px;line-height:16px;text-align:center;font-size:13.33px;font-family:'Noto Serif CJK SC',serif;white-space:nowrap"><span style="font-family:'Liberation Mono',monospace;letter-spacing:-1.13px">B</span>相电压</div><div class="a" style="left:734px;top:699px;width:163px;height:16px;line-height:16px;text-align:center;font-size:13.33px;font-family:'Noto Serif CJK SC',serif;white-space:nowrap"><span style="font-family:'Liberation Mono',monospace;letter-spacing:-1.13px">C</span>相电压</div><div class="a" style="left:897px;top:699px;width:163px;height:16px;line-height:16px;text-align:center;font-size:13.33px;font-family:'Noto Serif CJK SC',serif;white-space:nowrap"><span style="font-family:'Liberation Mono',monospace;letter-spacing:-1.13px">A</span>相电流</div><div class="a" style="left:1060px;top:699px;width:163px;height:16px;line-height:16px;text-align:center;font-size:13.33px;font-family:'Noto Serif CJK SC',serif;white-space:nowrap"><span style="font-family:'Liberation Mono',monospace;letter-spacing:-1.13px">B</span>相电流</div><div class="a" style="left:1223px;top:699px;width:163px;height:16px;line-height:16px;text-align:center;font-size:13.33px;font-family:'Noto Serif CJK SC',serif;white-space:nowrap"><span style="font-family:'Liberation Mono',monospace;letter-spacing:-1.13px">C</span>相电流</div><div class="a" style="left:186px;top:717px;height:17px;line-height:18px;font-family:'Liberation Mono','Noto Serif CJK SC',monospace;font-size:13.33px;white-space:nowrap"><span style="letter-spacing:-1.33px">2021</span>年<span style="letter-spacing:-1.33px">12</span>月<span style="letter-spacing:-1.33px">21</span>日<span style="display:inline-block;width:9px"> </span><span style="letter-spacing:-1.33px">13</span>时<span style="letter-spacing:-1.33px">46</span>分<span style="letter-spacing:-1.33px">29</span>秒</div><div class="a" style="left:487px;top:717.5px;width:80px;height:17px;line-height:18px;text-align:right;font-family:'Liberation Mono','Noto Serif CJK SC',monospace;font-size:13px;letter-spacing:-1.13px;white-space:nowrap">64.6</div><div class="a" style="left:650px;top:717.5px;width:80px;height:17px;line-height:18px;text-align:right;font-family:'Liberation Mono','Noto Serif CJK SC',monospace;font-size:13px;letter-spacing:-1.13px;white-space:nowrap">233.4</div><div class="a" style="left:813px;top:717.5px;width:80px;height:17px;line-height:18px;text-align:right;font-family:'Liberation Mono','Noto Serif CJK SC',monospace;font-size:13px;letter-spacing:-1.13px;white-space:nowrap">-295.9</div><div class="a" style="left:976px;top:717.5px;width:80px;height:17px;line-height:18px;text-align:right;font-family:'Liberation Mono','Noto Serif CJK SC',monospace;font-size:13px;letter-spacing:-1.13px;white-space:nowrap">0.29</div><div class="a" style="left:1139px;top:717.5px;width:80px;height:17px;line-height:18px;text-align:right;font-family:'Liberation Mono','Noto Serif CJK SC',monospace;font-size:13px;letter-spacing:-1.13px;white-space:nowrap">1.59</div><div class="a" style="left:1302px;top:717.5px;width:80px;height:17px;line-height:18px;text-align:right;font-family:'Liberation Mono','Noto Serif CJK SC',monospace;font-size:13px;letter-spacing:-1.13px;white-space:nowrap">-2.68</div><div class="a" style="left:487px;top:734.5px;width:80px;height:17px;line-height:18px;text-align:right;font-family:'Liberation Mono','Noto Serif CJK SC',monospace;font-size:13px;letter-spacing:-1.13px;white-space:nowrap">34.5</div><div class="a" style="left:650px;top:734.5px;width:80px;height:17px;line-height:18px;text-align:right;font-family:'Liberation Mono','Noto Serif CJK SC',monospace;font-size:13px;letter-spacing:-1.13px;white-space:nowrap">252.6</div><div class="a" style="left:813px;top:734.5px;width:80px;height:17px;line-height:18px;text-align:right;font-family:'Liberation Mono','Noto Serif CJK SC',monospace;font-size:13px;letter-spacing:-1.13px;white-space:nowrap">-284.6</div><div class="a" style="left:976px;top:734.5px;width:80px;height:17px;line-height:18px;text-align:right;font-family:'Liberation Mono','Noto Serif CJK SC',monospace;font-size:13px;letter-spacing:-1.13px;white-space:nowrap">0.15</div><div class="a" style="left:1139px;top:734.5px;width:80px;height:17px;line-height:18px;text-align:right;font-family:'Liberation Mono','Noto Serif CJK SC',monospace;font-size:13px;letter-spacing:-1.13px;white-space:nowrap">1.71</div><div class="a" style="left:1302px;top:734.5px;width:80px;height:17px;line-height:18px;text-align:right;font-family:'Liberation Mono','Noto Serif CJK SC',monospace;font-size:13px;letter-spacing:-1.13px;white-space:nowrap">-2.58</div><div class="a" style="left:487px;top:751.5px;width:80px;height:17px;line-height:18px;text-align:right;font-family:'Liberation Mono','Noto Serif CJK SC',monospace;font-size:13px;letter-spacing:-1.13px;white-space:nowrap">3.8</div><div class="a" style="left:650px;top:751.5px;width:80px;height:17px;line-height:18px;text-align:right;font-family:'Liberation Mono','Noto Serif CJK SC',monospace;font-size:13px;letter-spacing:-1.13px;white-space:nowrap">269.3</div><div class="a" style="left:813px;top:751.5px;width:80px;height:17px;line-height:18px;text-align:right;font-family:'Liberation Mono','Noto Serif CJK SC',monospace;font-size:13px;letter-spacing:-1.13px;white-space:nowrap">-270.8</div><div class="a" style="left:976px;top:751.5px;width:80px;height:17px;line-height:18px;text-align:right;font-family:'Liberation Mono','Noto Serif CJK SC',monospace;font-size:13px;letter-spacing:-1.13px;white-space:nowrap">0.01</div><div class="a" style="left:1139px;top:751.5px;width:80px;height:17px;line-height:18px;text-align:right;font-family:'Liberation Mono','Noto Serif CJK SC',monospace;font-size:13px;letter-spacing:-1.13px;white-space:nowrap">1.83</div><div class="a" style="left:1302px;top:751.5px;width:80px;height:17px;line-height:18px;text-align:right;font-family:'Liberation Mono','Noto Serif CJK SC',monospace;font-size:13px;letter-spacing:-1.13px;white-space:nowrap">-2.45</div><div class="a" style="left:487px;top:768.5px;width:80px;height:17px;line-height:18px;text-align:right;font-family:'Liberation Mono','Noto Serif CJK SC',monospace;font-size:13px;letter-spacing:-1.13px;white-space:nowrap">-27.0</div><div class="a" style="left:650px;top:768.5px;width:80px;height:17px;line-height:18px;text-align:right;font-family:'Liberation Mono','Noto Serif CJK SC',monospace;font-size:13px;letter-spacing:-1.13px;white-space:nowrap">283.4</div><div class="a" style="left:813px;top:768.5px;width:80px;height:17px;line-height:18px;text-align:right;font-family:'Liberation Mono','Noto Serif CJK SC',monospace;font-size:13px;letter-spacing:-1.13px;white-space:nowrap">-254.0</div><div class="a" style="left:976px;top:768.5px;width:80px;height:17px;line-height:18px;text-align:right;font-family:'Liberation Mono','Noto Serif CJK SC',monospace;font-size:13px;letter-spacing:-1.13px;white-space:nowrap">-0.13</div><div class="a" style="left:1139px;top:768.5px;width:80px;height:17px;line-height:18px;text-align:right;font-family:'Liberation Mono','Noto Serif CJK SC',monospace;font-size:13px;letter-spacing:-1.13px;white-space:nowrap">1.92</div><div class="a" style="left:1302px;top:768.5px;width:80px;height:17px;line-height:18px;text-align:right;font-family:'Liberation Mono','Noto Serif CJK SC',monospace;font-size:13px;letter-spacing:-1.13px;white-space:nowrap">-2.30</div><div class="a" style="left:487px;top:785.5px;width:80px;height:17px;line-height:18px;text-align:right;font-family:'Liberation Mono','Noto Serif CJK SC',monospace;font-size:13px;letter-spacing:-1.13px;white-space:nowrap">-57.3</div><div class="a" style="left:650px;top:785.5px;width:80px;height:17px;line-height:18px;text-align:right;font-family:'Liberation Mono','Noto Serif CJK SC',monospace;font-size:13px;letter-spacing:-1.13px;white-space:nowrap">294.8</div><div class="a" style="left:813px;top:785.5px;width:80px;height:17px;line-height:18px;text-align:right;font-family:'Liberation Mono','Noto Serif CJK SC',monospace;font-size:13px;letter-spacing:-1.13px;white-space:nowrap">-235.0</div><div class="a" style="left:976px;top:785.5px;width:80px;height:17px;line-height:18px;text-align:right;font-family:'Liberation Mono','Noto Serif CJK SC',monospace;font-size:13px;letter-spacing:-1.13px;white-space:nowrap">-0.27</div><div class="a" style="left:1139px;top:785.5px;width:80px;height:17px;line-height:18px;text-align:right;font-family:'Liberation Mono','Noto Serif CJK SC',monospace;font-size:13px;letter-spacing:-1.13px;white-space:nowrap">2.00</div><div class="a" style="left:1302px;top:785.5px;width:80px;height:17px;line-height:18px;text-align:right;font-family:'Liberation Mono','Noto Serif CJK SC',monospace;font-size:13px;letter-spacing:-1.13px;white-space:nowrap">-2.13</div><div class="a" style="left:487px;top:802.5px;width:80px;height:17px;line-height:18px;text-align:right;font-family:'Liberation Mono','Noto Serif CJK SC',monospace;font-size:13px;letter-spacing:-1.13px;white-space:nowrap">-87.3</div><div class="a" style="left:650px;top:802.5px;width:80px;height:17px;line-height:18px;text-align:right;font-family:'Liberation Mono','Noto Serif CJK SC',monospace;font-size:13px;letter-spacing:-1.13px;white-space:nowrap">303.6</div><div class="a" style="left:813px;top:802.5px;width:80px;height:17px;line-height:18px;text-align:right;font-family:'Liberation Mono','Noto Serif CJK SC',monospace;font-size:13px;letter-spacing:-1.13px;white-space:nowrap">-213.6</div><div class="a" style="left:976px;top:802.5px;width:80px;height:17px;line-height:18px;text-align:right;font-family:'Liberation Mono','Noto Serif CJK SC',monospace;font-size:13px;letter-spacing:-1.13px;white-space:nowrap">-0.40</div><div class="a" style="left:1139px;top:802.5px;width:80px;height:17px;line-height:18px;text-align:right;font-family:'Liberation Mono','Noto Serif CJK SC',monospace;font-size:13px;letter-spacing:-1.13px;white-space:nowrap">2.06</div><div class="a" style="left:1302px;top:802.5px;width:80px;height:17px;line-height:18px;text-align:right;font-family:'Liberation Mono','Noto Serif CJK SC',monospace;font-size:13px;letter-spacing:-1.13px;white-space:nowrap">-1.94</div><div class="a" style="left:487px;top:819.5px;width:80px;height:17px;line-height:18px;text-align:right;font-family:'Liberation Mono','Noto Serif CJK SC',monospace;font-size:13px;letter-spacing:-1.13px;white-space:nowrap">-116.1</div><div class="a" style="left:650px;top:819.5px;width:80px;height:17px;line-height:18px;text-align:right;font-family:'Liberation Mono','Noto Serif CJK SC',monospace;font-size:13px;letter-spacing:-1.13px;white-space:nowrap">309.2</div><div class="a" style="left:813px;top:819.5px;width:80px;height:17px;line-height:18px;text-align:right;font-family:'Liberation Mono','Noto Serif CJK SC',monospace;font-size:13px;letter-spacing:-1.13px;white-space:nowrap">-190.1</div><div class="a" style="left:976px;top:819.5px;width:80px;height:17px;line-height:18px;text-align:right;font-family:'Liberation Mono','Noto Serif CJK SC',monospace;font-size:13px;letter-spacing:-1.13px;white-space:nowrap">-0.53</div><div class="a" style="left:1139px;top:819.5px;width:80px;height:17px;line-height:18px;text-align:right;font-family:'Liberation Mono','Noto Serif CJK SC',monospace;font-size:13px;letter-spacing:-1.13px;white-space:nowrap">2.09</div><div class="a" style="left:1302px;top:819.5px;width:80px;height:17px;line-height:18px;text-align:right;font-family:'Liberation Mono','Noto Serif CJK SC',monospace;font-size:13px;letter-spacing:-1.13px;white-space:nowrap">-1.72</div><div class="a" style="left:487px;top:836.5px;width:80px;height:17px;line-height:18px;text-align:right;font-family:'Liberation Mono','Noto Serif CJK SC',monospace;font-size:13px;letter-spacing:-1.13px;white-space:nowrap">-144.0</div><div class="a" style="left:650px;top:836.5px;width:80px;height:17px;line-height:18px;text-align:right;font-family:'Liberation Mono','Noto Serif CJK SC',monospace;font-size:13px;letter-spacing:-1.13px;white-space:nowrap">312.1</div><div class="a" style="left:813px;top:836.5px;width:80px;height:17px;line-height:18px;text-align:right;font-family:'Liberation Mono','Noto Serif CJK SC',monospace;font-size:13px;letter-spacing:-1.13px;white-space:nowrap">-165.0</div><div class="a" style="left:976px;top:836.5px;width:80px;height:17px;line-height:18px;text-align:right;font-family:'Liberation Mono','Noto Serif CJK SC',monospace;font-size:13px;letter-spacing:-1.13px;white-space:nowrap">-0.65</div><div class="a" style="left:1139px;top:836.5px;width:80px;height:17px;line-height:18px;text-align:right;font-family:'Liberation Mono','Noto Serif CJK SC',monospace;font-size:13px;letter-spacing:-1.13px;white-space:nowrap">2.11</div><div class="a" style="left:1302px;top:836.5px;width:80px;height:17px;line-height:18px;text-align:right;font-family:'Liberation Mono','Noto Serif CJK SC',monospace;font-size:13px;letter-spacing:-1.13px;white-space:nowrap">-1.49</div><div class="a" style="left:487px;top:853.5px;width:80px;height:17px;line-height:18px;text-align:right;font-family:'Liberation Mono','Noto Serif CJK SC',monospace;font-size:13px;letter-spacing:-1.13px;white-space:nowrap">-170.4</div><div class="a" style="left:650px;top:853.5px;width:80px;height:17px;line-height:18px;text-align:right;font-family:'Liberation Mono','Noto Serif CJK SC',monospace;font-size:13px;letter-spacing:-1.13px;white-space:nowrap">311.7</div><div class="a" style="left:813px;top:853.5px;width:80px;height:17px;line-height:18px;text-align:right;font-family:'Liberation Mono','Noto Serif CJK SC',monospace;font-size:13px;letter-spacing:-1.13px;white-space:nowrap">-138.1</div><div class="a" style="left:976px;top:853.5px;width:80px;height:17px;line-height:18px;text-align:right;font-family:'Liberation Mono','Noto Serif CJK SC',monospace;font-size:13px;letter-spacing:-1.13px;white-space:nowrap">-0.77</div><div class="a" style="left:1139px;top:853.5px;width:80px;height:17px;line-height:18px;text-align:right;font-family:'Liberation Mono','Noto Serif CJK SC',monospace;font-size:13px;letter-spacing:-1.13px;white-space:nowrap">2.11</div><div class="a" style="left:1302px;top:853.5px;width:80px;height:17px;line-height:18px;text-align:right;font-family:'Liberation Mono','Noto Serif CJK SC',monospace;font-size:13px;letter-spacing:-1.13px;white-space:nowrap">-1.25</div><div class="a" style="left:487px;top:870.5px;width:80px;height:17px;line-height:18px;text-align:right;font-family:'Liberation Mono','Noto Serif CJK SC',monospace;font-size:13px;letter-spacing:-1.13px;white-space:nowrap">-195.2</div><div class="a" style="left:650px;top:870.5px;width:80px;height:17px;line-height:18px;text-align:right;font-family:'Liberation Mono','Noto Serif CJK SC',monospace;font-size:13px;letter-spacing:-1.13px;white-space:nowrap">308.4</div><div class="a" style="left:813px;top:870.5px;width:80px;height:17px;line-height:18px;text-align:right;font-family:'Liberation Mono','Noto Serif CJK SC',monospace;font-size:13px;letter-spacing:-1.13px;white-space:nowrap">-110.0</div><div class="a" style="left:976px;top:870.5px;width:80px;height:17px;line-height:18px;text-align:right;font-family:'Liberation Mono','Noto Serif CJK SC',monospace;font-size:13px;letter-spacing:-1.13px;white-space:nowrap">-0.89</div><div class="a" style="left:1139px;top:870.5px;width:80px;height:17px;line-height:18px;text-align:right;font-family:'Liberation Mono','Noto Serif CJK SC',monospace;font-size:13px;letter-spacing:-1.13px;white-space:nowrap">2.09</div><div class="a" style="left:1302px;top:870.5px;width:80px;height:17px;line-height:18px;text-align:right;font-family:'Liberation Mono','Noto Serif CJK SC',monospace;font-size:13px;letter-spacing:-1.13px;white-space:nowrap">-1.00</div><div class="a" style="left:487px;top:887.5px;width:80px;height:17px;line-height:18px;text-align:right;font-family:'Liberation Mono','Noto Serif CJK SC',monospace;font-size:13px;letter-spacing:-1.13px;white-space:nowrap">-218.1</div><div class="a" style="left:650px;top:887.5px;width:80px;height:17px;line-height:18px;text-align:right;font-family:'Liberation Mono','Noto Serif CJK SC',monospace;font-size:13px;letter-spacing:-1.13px;white-space:nowrap">302.2</div><div class="a" style="left:813px;top:887.5px;width:80px;height:17px;line-height:18px;text-align:right;font-family:'Liberation Mono','Noto Serif CJK SC',monospace;font-size:13px;letter-spacing:-1.13px;white-space:nowrap">-80.8</div><div class="a" style="left:976px;top:887.5px;width:80px;height:17px;line-height:18px;text-align:right;font-family:'Liberation Mono','Noto Serif CJK SC',monospace;font-size:13px;letter-spacing:-1.13px;white-space:nowrap">-0.99</div><div class="a" style="left:1139px;top:887.5px;width:80px;height:17px;line-height:18px;text-align:right;font-family:'Liberation Mono','Noto Serif CJK SC',monospace;font-size:13px;letter-spacing:-1.13px;white-space:nowrap">2.04</div><div class="a" style="left:1302px;top:887.5px;width:80px;height:17px;line-height:18px;text-align:right;font-family:'Liberation Mono','Noto Serif CJK SC',monospace;font-size:13px;letter-spacing:-1.13px;white-space:nowrap">-0.74</div><div class="a" style="left:487px;top:904.5px;width:80px;height:17px;line-height:18px;text-align:right;font-family:'Liberation Mono','Noto Serif CJK SC',monospace;font-size:13px;letter-spacing:-1.13px;white-space:nowrap">-238.8</div><div class="a" style="left:650px;top:904.5px;width:80px;height:17px;line-height:18px;text-align:right;font-family:'Liberation Mono','Noto Serif CJK SC',monospace;font-size:13px;letter-spacing:-1.13px;white-space:nowrap">292.7</div><div class="a" style="left:813px;top:904.5px;width:80px;height:17px;line-height:18px;text-align:right;font-family:'Liberation Mono','Noto Serif CJK SC',monospace;font-size:13px;letter-spacing:-1.13px;white-space:nowrap">-51.0</div><div class="a" style="left:976px;top:904.5px;width:80px;height:17px;line-height:18px;text-align:right;font-family:'Liberation Mono','Noto Serif CJK SC',monospace;font-size:13px;letter-spacing:-1.13px;white-space:nowrap">-1.08</div><div class="a" style="left:1139px;top:904.5px;width:80px;height:17px;line-height:18px;text-align:right;font-family:'Liberation Mono','Noto Serif CJK SC',monospace;font-size:13px;letter-spacing:-1.13px;white-space:nowrap">1.98</div><div class="a" style="left:1302px;top:904.5px;width:80px;height:17px;line-height:18px;text-align:right;font-family:'Liberation Mono','Noto Serif CJK SC',monospace;font-size:13px;letter-spacing:-1.13px;white-space:nowrap">-0.46</div><div class="a" style="left:487px;top:921.5px;width:80px;height:17px;line-height:18px;text-align:right;font-family:'Liberation Mono','Noto Serif CJK SC',monospace;font-size:13px;letter-spacing:-1.13px;white-space:nowrap">-257.6</div><div class="a" style="left:650px;top:921.5px;width:80px;height:17px;line-height:18px;text-align:right;font-family:'Liberation Mono','Noto Serif CJK SC',monospace;font-size:13px;letter-spacing:-1.13px;white-space:nowrap">280.8</div><div class="a" style="left:813px;top:921.5px;width:80px;height:17px;line-height:18px;text-align:right;font-family:'Liberation Mono','Noto Serif CJK SC',monospace;font-size:13px;letter-spacing:-1.13px;white-space:nowrap">-20.7</div><div class="a" style="left:976px;top:921.5px;width:80px;height:17px;line-height:18px;text-align:right;font-family:'Liberation Mono','Noto Serif CJK SC',monospace;font-size:13px;letter-spacing:-1.13px;white-space:nowrap">-1.17</div><div class="a" style="left:1139px;top:921.5px;width:80px;height:17px;line-height:18px;text-align:right;font-family:'Liberation Mono','Noto Serif CJK SC',monospace;font-size:13px;letter-spacing:-1.13px;white-space:nowrap">1.89</div><div class="a" style="left:1302px;top:921.5px;width:80px;height:17px;line-height:18px;text-align:right;font-family:'Liberation Mono','Noto Serif CJK SC',monospace;font-size:13px;letter-spacing:-1.13px;white-space:nowrap">-0.19</div><div class="a" style="left:487px;top:938.5px;width:80px;height:17px;line-height:18px;text-align:right;font-family:'Liberation Mono','Noto Serif CJK SC',monospace;font-size:13px;letter-spacing:-1.13px;white-space:nowrap">-273.6</div><div class="a" style="left:650px;top:938.5px;width:80px;height:17px;line-height:18px;text-align:right;font-family:'Liberation Mono','Noto Serif CJK SC',monospace;font-size:13px;letter-spacing:-1.13px;white-space:nowrap">266.0</div><div class="a" style="left:813px;top:938.5px;width:80px;height:17px;line-height:18px;text-align:right;font-family:'Liberation Mono','Noto Serif CJK SC',monospace;font-size:13px;letter-spacing:-1.13px;white-space:nowrap">9.8</div><div class="a" style="left:976px;top:938.5px;width:80px;height:17px;line-height:18px;text-align:right;font-family:'Liberation Mono','Noto Serif CJK SC',monospace;font-size:13px;letter-spacing:-1.13px;white-space:nowrap">-1.24</div><div class="a" style="left:1139px;top:938.5px;width:80px;height:17px;line-height:18px;text-align:right;font-family:'Liberation Mono','Noto Serif CJK SC',monospace;font-size:13px;letter-spacing:-1.13px;white-space:nowrap">1.79</div><div class="a" style="left:1302px;top:938.5px;width:80px;height:17px;line-height:18px;text-align:right;font-family:'Liberation Mono','Noto Serif CJK SC',monospace;font-size:13px;letter-spacing:-1.13px;white-space:nowrap">0.09</div><div class="a" style="left:487px;top:955.5px;width:80px;height:17px;line-height:18px;text-align:right;font-family:'Liberation Mono','Noto Serif CJK SC',monospace;font-size:13px;letter-spacing:-1.13px;white-space:nowrap">-286.7</div><div class="a" style="left:650px;top:955.5px;width:80px;height:17px;line-height:18px;text-align:right;font-family:'Liberation Mono','Noto Serif CJK SC',monospace;font-size:13px;letter-spacing:-1.13px;white-space:nowrap">248.6</div><div class="a" style="left:813px;top:955.5px;width:80px;height:17px;line-height:18px;text-align:right;font-family:'Liberation Mono','Noto Serif CJK SC',monospace;font-size:13px;letter-spacing:-1.13px;white-space:nowrap">40.5</div><div class="a" style="left:976px;top:955.5px;width:80px;height:17px;line-height:18px;text-align:right;font-family:'Liberation Mono','Noto Serif CJK SC',monospace;font-size:13px;letter-spacing:-1.13px;white-space:nowrap">-1.31</div><div class="a" style="left:1139px;top:955.5px;width:80px;height:17px;line-height:18px;text-align:right;font-family:'Liberation Mono','Noto Serif CJK SC',monospace;font-size:13px;letter-spacing:-1.13px;white-space:nowrap">1.67</div><div class="a" style="left:1302px;top:955.5px;width:80px;height:17px;line-height:18px;text-align:right;font-family:'Liberation Mono','Noto Serif CJK SC',monospace;font-size:13px;letter-spacing:-1.13px;white-space:nowrap">0.37</div><div class="a" style="left:487px;top:972.5px;width:80px;height:17px;line-height:18px;text-align:right;font-family:'Liberation Mono','Noto Serif CJK SC',monospace;font-size:13px;letter-spacing:-1.13px;white-space:nowrap">-297.5</div><div class="a" style="left:650px;top:972.5px;width:80px;height:17px;line-height:18px;text-align:right;font-family:'Liberation Mono','Noto Serif CJK SC',monospace;font-size:13px;letter-spacing:-1.13px;white-space:nowrap">228.8</div><div class="a" style="left:813px;top:972.5px;width:80px;height:17px;line-height:18px;text-align:right;font-family:'Liberation Mono','Noto Serif CJK SC',monospace;font-size:13px;letter-spacing:-1.13px;white-space:nowrap">70.6</div><div class="a" style="left:976px;top:972.5px;width:80px;height:17px;line-height:18px;text-align:right;font-family:'Liberation Mono','Noto Serif CJK SC',monospace;font-size:13px;letter-spacing:-1.13px;white-space:nowrap">-1.35</div><div class="a" style="left:1139px;top:972.5px;width:80px;height:17px;line-height:18px;text-align:right;font-family:'Liberation Mono','Noto Serif CJK SC',monospace;font-size:13px;letter-spacing:-1.13px;white-space:nowrap">1.54</div><div class="a" style="left:1302px;top:972.5px;width:80px;height:17px;line-height:18px;text-align:right;font-family:'Liberation Mono','Noto Serif CJK SC',monospace;font-size:13px;letter-spacing:-1.13px;white-space:nowrap">0.64</div><div class="a" style="left:487px;top:989.5px;width:80px;height:17px;line-height:18px;text-align:right;font-family:'Liberation Mono','Noto Serif CJK SC',monospace;font-size:13px;letter-spacing:-1.13px;white-space:nowrap">-305.5</div><div class="a" style="left:650px;top:989.5px;width:80px;height:17px;line-height:18px;text-align:right;font-family:'Liberation Mono','Noto Serif CJK SC',monospace;font-size:13px;letter-spacing:-1.13px;white-space:nowrap">207.0</div><div class="a" style="left:813px;top:989.5px;width:80px;height:17px;line-height:18px;text-align:right;font-family:'Liberation Mono','Noto Serif CJK SC',monospace;font-size:13px;letter-spacing:-1.13px;white-space:nowrap">99.9</div><div class="a" style="left:976px;top:989.5px;width:80px;height:17px;line-height:18px;text-align:right;font-family:'Liberation Mono','Noto Serif CJK SC',monospace;font-size:13px;letter-spacing:-1.13px;white-space:nowrap">-1.38</div><div class="a" style="left:1139px;top:989.5px;width:80px;height:17px;line-height:18px;text-align:right;font-family:'Liberation Mono','Noto Serif CJK SC',monospace;font-size:13px;letter-spacing:-1.13px;white-space:nowrap">1.39</div><div class="a" style="left:1302px;top:989.5px;width:80px;height:17px;line-height:18px;text-align:right;font-family:'Liberation Mono','Noto Serif CJK SC',monospace;font-size:13px;letter-spacing:-1.13px;white-space:nowrap">0.90</div><div class="a" style="left:487px;top:1006.5px;width:80px;height:17px;line-height:18px;text-align:right;font-family:'Liberation Mono','Noto Serif CJK SC',monospace;font-size:13px;letter-spacing:-1.13px;white-space:nowrap">-310.3</div><div class="a" style="left:650px;top:1006.5px;width:80px;height:17px;line-height:18px;text-align:right;font-family:'Liberation Mono','Noto Serif CJK SC',monospace;font-size:13px;letter-spacing:-1.13px;white-space:nowrap">183.1</div><div class="a" style="left:813px;top:1006.5px;width:80px;height:17px;line-height:18px;text-align:right;font-family:'Liberation Mono','Noto Serif CJK SC',monospace;font-size:13px;letter-spacing:-1.13px;white-space:nowrap">128.2</div><div class="a" style="left:976px;top:1006.5px;width:80px;height:17px;line-height:18px;text-align:right;font-family:'Liberation Mono','Noto Serif CJK SC',monospace;font-size:13px;letter-spacing:-1.13px;white-space:nowrap">-1.40</div><div class="a" style="left:1139px;top:1006.5px;width:80px;height:17px;line-height:18px;text-align:right;font-family:'Liberation Mono','Noto Serif CJK SC',monospace;font-size:13px;letter-spacing:-1.13px;white-space:nowrap">1.23</div><div class="a" style="left:1302px;top:1006.5px;width:80px;height:17px;line-height:18px;text-align:right;font-family:'Liberation Mono','Noto Serif CJK SC',monospace;font-size:13px;letter-spacing:-1.13px;white-space:nowrap">1.17</div><div class="a" style="left:487px;top:1023.5px;width:80px;height:17px;line-height:18px;text-align:right;font-family:'Liberation Mono','Noto Serif CJK SC',monospace;font-size:13px;letter-spacing:-1.13px;white-space:nowrap">-312.2</div><div class="a" style="left:650px;top:1023.5px;width:80px;height:17px;line-height:18px;text-align:right;font-family:'Liberation Mono','Noto Serif CJK SC',monospace;font-size:13px;letter-spacing:-1.13px;white-space:nowrap">157.4</div><div class="a" style="left:813px;top:1023.5px;width:80px;height:17px;line-height:18px;text-align:right;font-family:'Liberation Mono','Noto Serif CJK SC',monospace;font-size:13px;letter-spacing:-1.13px;white-space:nowrap">155.4</div><div class="a" style="left:976px;top:1023.5px;width:80px;height:17px;line-height:18px;text-align:right;font-family:'Liberation Mono','Noto Serif CJK SC',monospace;font-size:13px;letter-spacing:-1.13px;white-space:nowrap">-1.41</div><div class="a" style="left:1139px;top:1023.5px;width:80px;height:17px;line-height:18px;text-align:right;font-family:'Liberation Mono','Noto Serif CJK SC',monospace;font-size:13px;letter-spacing:-1.13px;white-space:nowrap">1.06</div><div class="a" style="left:1302px;top:1023.5px;width:80px;height:17px;line-height:18px;text-align:right;font-family:'Liberation Mono','Noto Serif CJK SC',monospace;font-size:13px;letter-spacing:-1.13px;white-space:nowrap">1.41</div><div class="a" style="left:1484px;top:682px;width:17px;height:358px;background:#f7f7f7"></div><div class="a" style="left:1485px;top:682px;width:16px;height:16px;box-sizing:border-box;background:#f0f0f0;border:1px solid;border-color:#fff #696969 #696969 #fff;box-shadow:inset -1px -1px 0 #a0a0a0"></div><div class="a" style="left:1485px;top:698px;width:16px;height:17px;box-sizing:border-box;background:#f0f0f0;border:1px solid;border-color:#fff #696969 #696969 #fff;box-shadow:inset -1px -1px 0 #a0a0a0"></div><div class="a" style="left:1485px;top:1024px;width:16px;height:16px;box-sizing:border-box;background:#f0f0f0;border:1px solid;border-color:#fff #696969 #696969 #fff;box-shadow:inset -1px -1px 0 #a0a0a0"></div><svg class="a" style="left:1489px;top:688px" width="7" height="4" viewBox="0 0 7 4"><path d="M0 4h7L3.500 0z" fill="#000"/></svg><svg class="a" style="left:1489px;top:1030px" width="7" height="4" viewBox="0 0 7 4"><path d="M0 0h7L3.500 4z" fill="#000"/></svg><div class="a" style="left:76px;top:1040px;width:1425px;height:17px;background:#f7f7f7"></div><div class="a" style="left:76px;top:1040px;width:16px;height:17px;box-sizing:border-box;background:#f0f0f0;border:1px solid;border-color:#fff #696969 #696969 #fff;box-shadow:inset -1px -1px 0 #a0a0a0"></div><div class="a" style="left:92px;top:1040px;width:17px;height:17px;box-sizing:border-box;background:#f0f0f0;border:1px solid;border-color:#fff #696969 #696969 #fff;box-shadow:inset -1px -1px 0 #a0a0a0"></div><div class="a" style="left:1469px;top:1040px;width:16px;height:17px;box-sizing:border-box;background:#f0f0f0;border:1px solid;border-color:#fff #696969 #696969 #fff;box-shadow:inset -1px -1px 0 #a0a0a0"></div><div class="a" style="left:1485px;top:1040px;width:16px;height:17px;box-sizing:border-box;background:#f0f0f0;border:1px solid;border-color:#fff #696969 #696969 #fff;box-shadow:inset -1px -1px 0 #a0a0a0"></div><svg class="a" style="left:81px;top:1045px" width="4" height="7" viewBox="0 0 4 7"><path d="M4 0V7L0 3.500z" fill="#000"/></svg><svg class="a" style="left:1475px;top:1045px" width="4" height="7" viewBox="0 0 4 7"><path d="M0 0V7L4 3.500z" fill="#000"/></svg><div class="a" style="left:1501px;top:665px;width:1px;height:393px;background:#a0a0a0"></div><div class="a" style="left:76px;top:1057px;width:1426px;height:1px;background:#606060"></div><div class="a" style="left:75px;top:1058px;width:1428px;height:1px;background:#fff"></div>
</body></html>
